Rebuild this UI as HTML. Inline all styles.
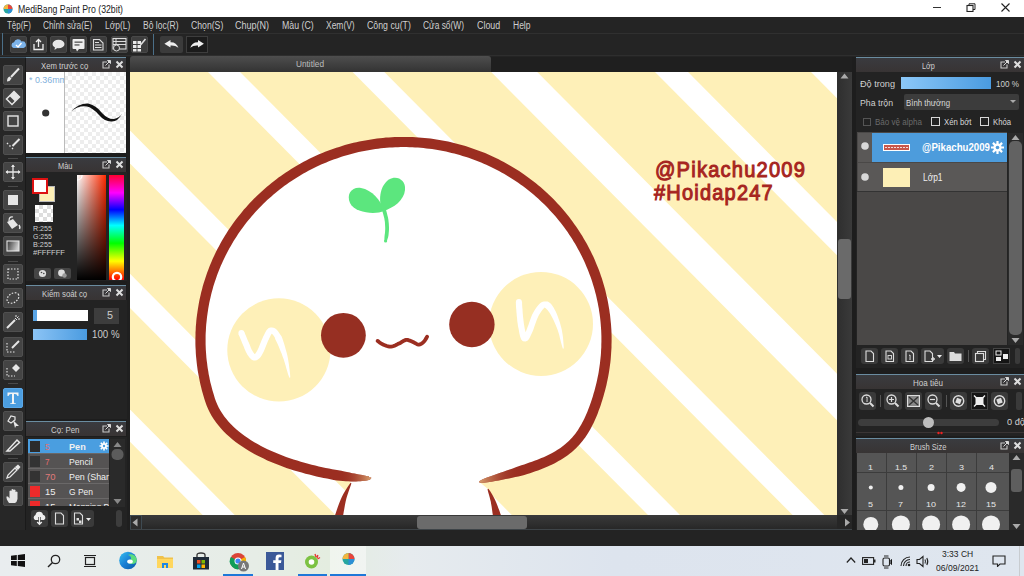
<!DOCTYPE html>
<html><head><meta charset="utf-8"><title>MediBang Paint Pro</title>
<style>
*{margin:0;padding:0;box-sizing:border-box}
html,body{width:1024px;height:576px;overflow:hidden}
body{position:relative;background:#1f1f1f;font-family:"Liberation Sans",sans-serif}
.a{position:absolute}
.t{white-space:pre;transform-origin:0 50%}
svg{overflow:hidden}
</style></head><body>
<div class="a" style="left:0px;top:0px;width:1024px;height:17px;background:#fff"></div>
<svg class="a" style="left:3px;top:4px" width="10" height="10" viewBox="0 0 10 10"><circle cx="5" cy="5" r="4.5" fill="#27a6a0"/><path d="M5,0.5 A4.5,4.5 0 0 1 9.5,5 L5,5Z" fill="#e8453c"/><path d="M0.5,5 A4.5,4.5 0 0 1 5,0.5 L5,5Z" fill="#f3b63f"/><path d="M5,5 L9.5,5 A4.5,4.5 0 0 1 5,9.5Z" fill="#2d8fd5"/></svg>
<span class="a t" style="left:18px;top:3.9px;font-size:10.5px;line-height:10.5px;color:#222;font-weight:400;font-family:'Liberation Sans',sans-serif;transform:scaleX(0.833);">MediBang Paint Pro (32bit)</span>
<div class="a" style="left:933px;top:7px;width:8px;height:1px;background:#333"></div>
<svg class="a" style="left:966px;top:3px" width="10" height="9" viewBox="0 0 10 9"><rect x="1" y="2.5" width="6" height="6" fill="none" stroke="#222" stroke-width="1.1"/><path d="M3,2.5 V0.8 H9 V6.5 H7" fill="none" stroke="#222" stroke-width="1"/></svg>
<svg class="a" style="left:1001px;top:3px" width="9" height="9" viewBox="0 0 9 9"><path d="M0.5,0.5 L8.5,8.5 M8.5,0.5 L0.5,8.5" stroke="#222" stroke-width="1.1"/></svg>
<div class="a" style="left:0px;top:17px;width:1024px;height:40px;background:#242424"></div>
<div class="a" style="left:0px;top:33px;width:1024px;height:1px;background:#303030"></div>
<div class="a" style="left:0px;top:55px;width:1024px;height:1px;background:#2e2e2e"></div>
<span class="a t" style="left:6.8px;top:20.5px;font-size:10px;line-height:10px;color:#cfcfcf;font-weight:400;font-family:'Liberation Sans',sans-serif;transform:scaleX(0.793);">Tệp(F)</span>
<span class="a t" style="left:43.2px;top:20.5px;font-size:10px;line-height:10px;color:#cfcfcf;font-weight:400;font-family:'Liberation Sans',sans-serif;transform:scaleX(0.827);">Chỉnh sửa(E)</span>
<span class="a t" style="left:105.3px;top:20.5px;font-size:10px;line-height:10px;color:#cfcfcf;font-weight:400;font-family:'Liberation Sans',sans-serif;transform:scaleX(0.849);">Lớp(L)</span>
<span class="a t" style="left:142.7px;top:20.5px;font-size:10px;line-height:10px;color:#cfcfcf;font-weight:400;font-family:'Liberation Sans',sans-serif;transform:scaleX(0.854);">Bộ lọc(R)</span>
<span class="a t" style="left:190.6px;top:20.5px;font-size:10px;line-height:10px;color:#cfcfcf;font-weight:400;font-family:'Liberation Sans',sans-serif;transform:scaleX(0.867);">Chọn(S)</span>
<span class="a t" style="left:235.2px;top:20.5px;font-size:10px;line-height:10px;color:#cfcfcf;font-weight:400;font-family:'Liberation Sans',sans-serif;transform:scaleX(0.902);">Chụp(N)</span>
<span class="a t" style="left:281.5px;top:20.5px;font-size:10px;line-height:10px;color:#cfcfcf;font-weight:400;font-family:'Liberation Sans',sans-serif;transform:scaleX(0.878);">Màu (C)</span>
<span class="a t" style="left:325.5px;top:20.5px;font-size:10px;line-height:10px;color:#cfcfcf;font-weight:400;font-family:'Liberation Sans',sans-serif;transform:scaleX(0.846);">Xem(V)</span>
<span class="a t" style="left:367px;top:20.5px;font-size:10px;line-height:10px;color:#cfcfcf;font-weight:400;font-family:'Liberation Sans',sans-serif;transform:scaleX(0.876);">Công cụ(T)</span>
<span class="a t" style="left:423.1px;top:20.5px;font-size:10px;line-height:10px;color:#cfcfcf;font-weight:400;font-family:'Liberation Sans',sans-serif;transform:scaleX(0.838);">Cửa sổ(W)</span>
<span class="a t" style="left:476.5px;top:20.5px;font-size:10px;line-height:10px;color:#cfcfcf;font-weight:400;font-family:'Liberation Sans',sans-serif;transform:scaleX(0.888);">Cloud</span>
<span class="a t" style="left:512.8px;top:20.5px;font-size:10px;line-height:10px;color:#cfcfcf;font-weight:400;font-family:'Liberation Sans',sans-serif;transform:scaleX(0.850);">Help</span>
<div class="a" style="left:2px;top:33px;width:1px;height:22px;background:#4b6f88"></div>
<div class="a" style="left:10px;top:36px;width:17px;height:17px;background:#3d3d3d;border:1px solid #484848;border-radius:2px"></div>
<div class="a" style="left:30px;top:36px;width:17px;height:17px;background:#3d3d3d;border:1px solid #484848;border-radius:2px"></div>
<div class="a" style="left:50px;top:36px;width:17px;height:17px;background:#3d3d3d;border:1px solid #484848;border-radius:2px"></div>
<div class="a" style="left:70px;top:36px;width:17px;height:17px;background:#3d3d3d;border:1px solid #484848;border-radius:2px"></div>
<div class="a" style="left:90px;top:36px;width:17px;height:17px;background:#3d3d3d;border:1px solid #484848;border-radius:2px"></div>
<div class="a" style="left:111px;top:36px;width:17px;height:17px;background:#3d3d3d;border:1px solid #484848;border-radius:2px"></div>
<div class="a" style="left:131px;top:36px;width:17px;height:17px;background:#3d3d3d;border:1px solid #484848;border-radius:2px"></div>
<svg class="a" style="left:10px;top:36px" width="17" height="17" viewBox="0 0 17 17"><path d="M3.5,12 A3,3 0 0 1 4,6.2 A4,4 0 0 1 11.5,5.5 A3.2,3.2 0 0 1 13.5,12Z" fill="#7db4ea"/><path d="M6,9 L8,11 L11.5,7" fill="none" stroke="#fff" stroke-width="1.4"/></svg>
<svg class="a" style="left:30px;top:36px" width="17" height="17" viewBox="0 0 17 17"><path d="M4,8 V13.5 H13 V8" fill="none" stroke="#eee" stroke-width="1.3"/><path d="M8.5,11 V3.5 M6,6 L8.5,3.5 L11,6" fill="none" stroke="#eee" stroke-width="1.3"/></svg>
<svg class="a" style="left:50px;top:36px" width="17" height="17" viewBox="0 0 17 17"><ellipse cx="8.5" cy="8" rx="6" ry="4.3" fill="#e8e8e8"/><path d="M5,11 L4.5,14 L8,11.5Z" fill="#e8e8e8"/></svg>
<svg class="a" style="left:70px;top:36px" width="17" height="17" viewBox="0 0 17 17"><rect x="2.5" y="3" width="12" height="10" rx="1" fill="#eee"/><path d="M6,13 L7,15.5 L9,13Z" fill="#eee"/><rect x="4.5" y="5.5" width="8" height="1.3" fill="#555"/><rect x="4.5" y="8.3" width="5" height="1.3" fill="#555"/></svg>
<svg class="a" style="left:90px;top:36px" width="17" height="17" viewBox="0 0 17 17"><path d="M3.5,3.5 H9.5 L13,7 V14 H3.5Z" fill="none" stroke="#ddd" stroke-width="1.1"/><path d="M5,6.5 H9 M5,9 H11.5 M5,11.5 H11.5" stroke="#ddd" stroke-width="1.1"/></svg>
<svg class="a" style="left:111px;top:36px" width="17" height="17" viewBox="0 0 17 17"><rect x="2" y="2.5" width="13" height="10.5" fill="none" stroke="#ddd" stroke-width="1.1"/><path d="M2,5.5 H15 M2,8.5 H15 M5,2.5 V8.5" stroke="#ddd" stroke-width="1"/><circle cx="5.5" cy="12" r="3" fill="#3b3b3b" stroke="#ddd" stroke-width="1"/></svg>
<svg class="a" style="left:131px;top:36px" width="17" height="17" viewBox="0 0 17 17"><path d="M2,5 H5.5 V8 H2Z M6.5,5 H10 V8 H6.5Z M2,9 H5.5 V12 H2Z M6.5,9 H10 V12 H6.5Z M2,13 H5.5 V15.5 H2Z M6.5,13 H10 V15.5 H6.5Z" fill="#e8e8e8"/><path d="M9.5,9 L14.5,3" stroke="#ddd" stroke-width="1.6"/></svg>
<div class="a" style="left:153px;top:34px;width:1px;height:21px;background:#4b6f88"></div>
<div class="a" style="left:160px;top:36px;width:23px;height:17px;background:#3b3b3b;border-radius:2px"></div>
<svg class="a" style="left:160px;top:36px" width="23" height="17" viewBox="0 0 23 17"><path d="M4.4,7.8 L10.5,4 V6.2 Q16.5,6 18.4,11.8 Q15,9.2 10.5,9.6 V11.6 Z" fill="#eee"/></svg>
<div class="a" style="left:186px;top:36px;width:22px;height:17px;background:#1b1b1b;border:1px solid #3d3d3d"></div>
<svg class="a" style="left:186px;top:36px" width="22" height="17" viewBox="0 0 22 17"><path d="M17.9,7.8 L12,4 V6.2 Q6,6 4.2,11.8 Q7.5,9.2 12,9.6 V11.6 Z" fill="#eee"/></svg>
<div class="a" style="left:0px;top:57px;width:26px;height:473px;background:#272727"></div>
<div class="a" style="left:25px;top:57px;width:1px;height:473px;background:#1a1a1a"></div>
<div class="a" style="left:0px;top:57px;width:26px;height:1px;background:#3d5566"></div>
<div class="a" style="left:8px;top:158px;width:10px;height:1px;background:#4a4a4a"></div>
<div class="a" style="left:8px;top:186px;width:10px;height:1px;background:#4a4a4a"></div>
<div class="a" style="left:8px;top:261px;width:10px;height:1px;background:#4a4a4a"></div>
<div class="a" style="left:8px;top:383px;width:10px;height:1px;background:#4a4a4a"></div>
<div class="a" style="left:8px;top:458px;width:10px;height:1px;background:#4a4a4a"></div>
<div class="a" style="left:3px;top:65px;width:20px;height:20px;background:#444;border:1px solid #505050;border-radius:2px"></div>
<div class="a" style="left:3px;top:88px;width:20px;height:20px;background:#444;border:1px solid #505050;border-radius:2px"></div>
<div class="a" style="left:3px;top:111px;width:20px;height:20px;background:#444;border:1px solid #505050;border-radius:2px"></div>
<div class="a" style="left:3px;top:135px;width:20px;height:20px;background:#444;border:1px solid #505050;border-radius:2px"></div>
<div class="a" style="left:3px;top:162px;width:20px;height:20px;background:#444;border:1px solid #505050;border-radius:2px"></div>
<div class="a" style="left:3px;top:190px;width:20px;height:20px;background:#444;border:1px solid #505050;border-radius:2px"></div>
<div class="a" style="left:3px;top:213px;width:20px;height:20px;background:#444;border:1px solid #505050;border-radius:2px"></div>
<div class="a" style="left:3px;top:236px;width:20px;height:20px;background:#444;border:1px solid #505050;border-radius:2px"></div>
<div class="a" style="left:3px;top:264px;width:20px;height:20px;background:#444;border:1px solid #505050;border-radius:2px"></div>
<div class="a" style="left:3px;top:288px;width:20px;height:20px;background:#444;border:1px solid #505050;border-radius:2px"></div>
<div class="a" style="left:3px;top:312px;width:20px;height:20px;background:#444;border:1px solid #505050;border-radius:2px"></div>
<div class="a" style="left:3px;top:337px;width:20px;height:20px;background:#444;border:1px solid #505050;border-radius:2px"></div>
<div class="a" style="left:3px;top:360px;width:20px;height:20px;background:#444;border:1px solid #505050;border-radius:2px"></div>
<div class="a" style="left:3px;top:388px;width:20px;height:20px;background:#4c9ee0;border:1px solid #5aa8e8;border-radius:2px"></div>
<div class="a" style="left:3px;top:411px;width:20px;height:20px;background:#444;border:1px solid #505050;border-radius:2px"></div>
<div class="a" style="left:3px;top:435px;width:20px;height:20px;background:#444;border:1px solid #505050;border-radius:2px"></div>
<div class="a" style="left:3px;top:462px;width:20px;height:20px;background:#444;border:1px solid #505050;border-radius:2px"></div>
<div class="a" style="left:3px;top:486px;width:20px;height:20px;background:#444;border:1px solid #505050;border-radius:2px"></div>
<svg class="a" style="left:3px;top:65px" width="20" height="20" viewBox="0 0 20 20"><path d="M16,3.5 L8,12" stroke="#e6e6e6" stroke-width="2"/><path d="M4,16.5 Q4,12.5 6.5,11.5 L8.5,13.5 Q7.5,16 4,16.5Z" fill="#e6e6e6"/></svg>
<svg class="a" style="left:3px;top:88px" width="20" height="20" viewBox="0 0 20 20"><path d="M11,3.5 L16.5,9 L9,16.5 L3.5,11Z" fill="none" stroke="#e6e6e6" stroke-width="1.5"/><path d="M11,3.5 L16.5,9 L12,13.5 L6.5,8Z" fill="#e6e6e6"/></svg>
<svg class="a" style="left:3px;top:111px" width="20" height="20" viewBox="0 0 20 20"><rect x="5" y="5" width="10" height="10" fill="none" stroke="#e6e6e6" stroke-width="1.4"/></svg>
<svg class="a" style="left:3px;top:135px" width="20" height="20" viewBox="0 0 20 20"><path d="M4,8 L5,9 M6.5,10.5 L7.5,11.5 M9,13 L10,14" stroke="#e6e6e6" stroke-width="1.4"/><path d="M9.5,11 L16.5,4" stroke="#e6e6e6" stroke-width="2"/></svg>
<svg class="a" style="left:3px;top:162px" width="20" height="20" viewBox="0 0 20 20"><path d="M10,3 V17 M3,10 H17" stroke="#e6e6e6" stroke-width="1.3"/><path d="M10,2.5 L8,5 H12Z M10,17.5 L8,15 H12Z M2.5,10 L5,8 V12Z M17.5,10 L15,8 V12Z" fill="#e6e6e6"/></svg>
<svg class="a" style="left:3px;top:190px" width="20" height="20" viewBox="0 0 20 20"><rect x="5" y="5" width="10" height="10" fill="#e6e6e6"/></svg>
<svg class="a" style="left:3px;top:213px" width="20" height="20" viewBox="0 0 20 20"><path d="M4,9 L10,6 L15,12 L9,16Z" fill="#e6e6e6"/><path d="M6,8 Q6,3 10,4" fill="none" stroke="#e6e6e6" stroke-width="1.2"/><path d="M16,12 Q17.5,14 16.5,16" stroke="#e6e6e6" stroke-width="1.5" fill="none"/></svg>
<svg class="a" style="left:3px;top:236px" width="20" height="20" viewBox="0 0 20 20"><defs><linearGradient id="g8" x1="0" y1="0" x2="1" y2="0.3"><stop offset="0" stop-color="#333"/><stop offset="1" stop-color="#ccc"/></linearGradient></defs><rect x="4" y="5" width="12" height="10" fill="url(#g8)" stroke="#e6e6e6" stroke-width="1.1"/></svg>
<svg class="a" style="left:3px;top:264px" width="20" height="20" viewBox="0 0 20 20"><rect x="5" y="5" width="10" height="10" fill="none" stroke="#e6e6e6" stroke-width="1.2" stroke-dasharray="1.5 1.5"/></svg>
<svg class="a" style="left:3px;top:288px" width="20" height="20" viewBox="0 0 20 20"><ellipse cx="10" cy="10" rx="6.5" ry="4.5" transform="rotate(-35 10 10)" fill="none" stroke="#e6e6e6" stroke-width="1.2" stroke-dasharray="1.5 1.5"/></svg>
<svg class="a" style="left:3px;top:312px" width="20" height="20" viewBox="0 0 20 20"><path d="M4,16 L12,8" stroke="#e6e6e6" stroke-width="2"/><path d="M13,3 V5 M15.5,4.5 L14,6 M17,7 H15 M12,6 L14,8" stroke="#e6e6e6" stroke-width="1"/></svg>
<svg class="a" style="left:3px;top:337px" width="20" height="20" viewBox="0 0 20 20"><path d="M4,6 V15 H13" fill="none" stroke="#e6e6e6" stroke-width="1.1" stroke-dasharray="1.5 1.5"/><path d="M9,11 L16,4" stroke="#e6e6e6" stroke-width="2"/></svg>
<svg class="a" style="left:3px;top:360px" width="20" height="20" viewBox="0 0 20 20"><path d="M4,8 V16 H12" fill="none" stroke="#e6e6e6" stroke-width="1.1" stroke-dasharray="1.5 1.5"/><path d="M9,8 L13,4 L17,8 L13,12Z" fill="#e6e6e6"/></svg>
<svg class="a" style="left:3px;top:388px" width="20" height="20" viewBox="0 0 20 20"><path d="M4.5,4.5 H15.5 V8 H14.5 Q14,6 12,6 H11 V14.5 Q11,15.5 13,15.5 V16 H7 V15.5 Q9,15.5 9,14.5 V6 H8 Q6,6 5.5,8 H4.5Z" fill="#f4f4f4"/></svg>
<svg class="a" style="left:3px;top:411px" width="20" height="20" viewBox="0 0 20 20"><path d="M5,10 L8,5 L12,6 L12,9 L8,12Z" fill="none" stroke="#e6e6e6" stroke-width="1.2"/><path d="M10,9 L16,15 L13,15 L12,17Z" fill="#e6e6e6"/></svg>
<svg class="a" style="left:3px;top:435px" width="20" height="20" viewBox="0 0 20 20"><path d="M4,16 L14,5 L16.5,7.5 L7,16Z" fill="none" stroke="#e6e6e6" stroke-width="1.5"/></svg>
<svg class="a" style="left:3px;top:462px" width="20" height="20" viewBox="0 0 20 20"><path d="M4,16 L5,13 L12,6 L14,8 L7,15Z" fill="none" stroke="#e6e6e6" stroke-width="1.3"/><path d="M12,5 L15,2.5 L17.5,5 L15,8Z" fill="#e6e6e6"/></svg>
<svg class="a" style="left:3px;top:486px" width="20" height="20" viewBox="0 0 20 20"><path d="M6,17 Q3,13 3.5,10.5 L5,10.5 L6.5,12.5 V5 Q7.5,4 8.5,5 V10 V3.5 Q9.5,2.5 10.5,3.5 V10 V4 Q11.5,3 12.5,4 V10.5 V6 Q13.5,5 14.5,6 V13 Q14,16 12,17Z" fill="#e6e6e6"/></svg>
<div class="a" style="left:26px;top:57px;width:101px;height:473px;background:#1d1d1d"></div>
<div class="a" style="left:26px;top:57px;width:100px;height:1px;background:#6a8ca0"></div>
<div class="a" style="left:26px;top:58px;width:100px;height:14px;background:linear-gradient(#3a3b3f,#383434)"></div>
<span class="a t" style="left:40.8px;top:60.8px;font-size:9.5px;line-height:9.5px;color:#cfcfcf;font-weight:400;font-family:'Liberation Sans',sans-serif;transform:scaleX(0.814);">Xem trước cọ</span>
<svg class="a" style="left:102px;top:60px" width="9" height="9" viewBox="0 0 9 9"><path d="M5,2 H1 V8 H7 V4.5" fill="none" stroke="#c8c8c8" stroke-width="1.1"/><path d="M3.5,5.5 L7,2 M5.5,0.5 H8.5 V3.5Z" fill="#d8d8d8" stroke="#d8d8d8" stroke-width="1"/></svg>
<svg class="a" style="left:115px;top:60px" width="9" height="9" viewBox="0 0 9 9"><path d="M1.5,1.5 L7.5,7.5 M7.5,1.5 L1.5,7.5" stroke="#dedede" stroke-width="2"/></svg>
<div class="a" style="left:26px;top:72px;width:38px;height:81px;background:#fff"></div>
<span class="a t" style="left:28.5px;top:75.5px;font-size:9px;line-height:9px;color:#7fb0dc;font-weight:400;font-family:'Liberation Sans',sans-serif;transform:scaleX(0.987);">* 0.36mm</span>
<div class="a" style="left:64px;top:72px;width:62px;height:81px;background-color:#fff;background-image:linear-gradient(45deg,#ededed 25%,transparent 25%,transparent 75%,#ededed 75%),linear-gradient(45deg,#ededed 25%,transparent 25%,transparent 75%,#ededed 75%);background-size:8px 8px;background-position:0 0,4px 4px"></div>
<div class="a" style="left:64px;top:72px;width:0px;height:0px;"></div>
<svg class="a" style="left:26px;top:72px" width="100" height="81" viewBox="0 0 100 81"><circle cx="19.7" cy="41" r="3.6" fill="#333"/><path d="M44.7,39.7 Q53,31 62,31.5 Q70,33 76,41 Q82,47.5 88,47 Q93,46 96,41.8 Q92,49.5 86,49.5 Q79,50 73,43 Q67,36 61,34.5 Q53,33 44.7,39.7Z" fill="#111"/></svg>
<div class="a" style="left:64px;top:72px;width:1px;height:81px;background:#bbb"></div>
<div class="a" style="left:26px;top:157px;width:100px;height:1px;background:#6a8ca0"></div>
<div class="a" style="left:26px;top:158px;width:100px;height:14px;background:linear-gradient(#3a3b3f,#383434)"></div>
<span class="a t" style="left:57.5px;top:160.8px;font-size:9.5px;line-height:9.5px;color:#cfcfcf;font-weight:400;font-family:'Liberation Sans',sans-serif;transform:scaleX(0.784);">Màu</span>
<svg class="a" style="left:102px;top:160px" width="9" height="9" viewBox="0 0 9 9"><path d="M5,2 H1 V8 H7 V4.5" fill="none" stroke="#c8c8c8" stroke-width="1.1"/><path d="M3.5,5.5 L7,2 M5.5,0.5 H8.5 V3.5Z" fill="#d8d8d8" stroke="#d8d8d8" stroke-width="1"/></svg>
<svg class="a" style="left:115px;top:160px" width="9" height="9" viewBox="0 0 9 9"><path d="M1.5,1.5 L7.5,7.5 M7.5,1.5 L1.5,7.5" stroke="#dedede" stroke-width="2"/></svg>
<div class="a" style="left:26px;top:172px;width:101px;height:109px;background:#232323"></div>
<div class="a" style="left:32px;top:178px;width:16px;height:16px;background:#fff;border:2px solid #d11"></div>
<div class="a" style="left:39px;top:186px;width:16px;height:16px;background:#fdefb6;border:1px solid #bbb"></div>
<div class="a" style="left:32px;top:178px;width:16px;height:16px;background:#fff;border:2px solid #d11"></div>
<div class="a" style="left:35px;top:205px;width:18px;height:17px;background-color:#fff;background-image:linear-gradient(45deg,#ddd 25%,transparent 25%,transparent 75%,#ddd 75%),linear-gradient(45deg,#ddd 25%,transparent 25%,transparent 75%,#ddd 75%);background-size:8px 8px;background-position:0 0,4px 4px"></div>
<div class="a" style="left:77px;top:175px;width:29px;height:105px;background:linear-gradient(to bottom,rgba(0,0,0,0),#000),linear-gradient(to right,#fff,#ff2a00)"></div>
<div class="a" style="left:109px;top:175px;width:15px;height:105px;background:linear-gradient(to bottom,#ff0030 0%,#ff00ff 17%,#0000ff 33%,#00ffff 48%,#00ff00 65%,#ffff00 82%,#ff0000 100%)"></div>
<svg class="a" style="left:110px;top:270px" width="14" height="10" viewBox="0 0 14 10"><circle cx="7" cy="7" r="4.2" fill="none" stroke="#fff" stroke-width="2.2"/></svg>
<svg class="a" style="left:77px;top:175px" width="8" height="8" viewBox="0 0 8 8"><circle cx="0.5" cy="0.5" r="4.5" fill="none" stroke="#fff" stroke-width="1.2"/></svg>
<span class="a t" style="left:32.5px;top:225.0px;font-size:8px;line-height:8px;color:#cfcfcf;font-weight:400;font-family:'Liberation Sans',sans-serif;transform:scaleX(0.890);">R:255</span>
<span class="a t" style="left:32.5px;top:233.0px;font-size:8px;line-height:8px;color:#cfcfcf;font-weight:400;font-family:'Liberation Sans',sans-serif;transform:scaleX(0.872);">G:255</span>
<span class="a t" style="left:32.5px;top:241.0px;font-size:8px;line-height:8px;color:#cfcfcf;font-weight:400;font-family:'Liberation Sans',sans-serif;transform:scaleX(0.909);">B:255</span>
<span class="a t" style="left:32.5px;top:248.5px;font-size:8px;line-height:8px;color:#cfcfcf;font-weight:400;font-family:'Liberation Sans',sans-serif;transform:scaleX(0.947);">#FFFFFF</span>
<div class="a" style="left:34px;top:268px;width:17px;height:11px;background:#454545;border-radius:2px"></div>
<div class="a" style="left:54px;top:268px;width:17px;height:11px;background:#454545;border-radius:2px"></div>
<svg class="a" style="left:34px;top:268px" width="17" height="11" viewBox="0 0 17 11"><circle cx="8.5" cy="5.5" r="3.6" fill="#ddd"/><circle cx="7.5" cy="4.5" r="0.8" fill="#454545"/><circle cx="9.8" cy="5.5" r="0.8" fill="#454545"/></svg>
<svg class="a" style="left:54px;top:268px" width="17" height="11" viewBox="0 0 17 11"><circle cx="7.5" cy="5" r="3.4" fill="#ddd"/><circle cx="10.5" cy="7.5" r="2.2" fill="#999"/></svg>
<div class="a" style="left:26px;top:285px;width:100px;height:1px;background:#6a8ca0"></div>
<div class="a" style="left:26px;top:286px;width:100px;height:14px;background:linear-gradient(#3a3b3f,#383434)"></div>
<span class="a t" style="left:42.2px;top:288.8px;font-size:9.5px;line-height:9.5px;color:#cfcfcf;font-weight:400;font-family:'Liberation Sans',sans-serif;transform:scaleX(0.823);">Kiểm soát cọ</span>
<svg class="a" style="left:102px;top:288px" width="9" height="9" viewBox="0 0 9 9"><path d="M5,2 H1 V8 H7 V4.5" fill="none" stroke="#c8c8c8" stroke-width="1.1"/><path d="M3.5,5.5 L7,2 M5.5,0.5 H8.5 V3.5Z" fill="#d8d8d8" stroke="#d8d8d8" stroke-width="1"/></svg>
<svg class="a" style="left:115px;top:288px" width="9" height="9" viewBox="0 0 9 9"><path d="M1.5,1.5 L7.5,7.5 M7.5,1.5 L1.5,7.5" stroke="#dedede" stroke-width="2"/></svg>
<div class="a" style="left:26px;top:300px;width:101px;height:119px;background:#232323"></div>
<div class="a" style="left:33px;top:310px;width:55px;height:11px;background:#fff"></div>
<div class="a" style="left:33px;top:310px;width:4px;height:11px;background:#5aa5e6"></div>
<div class="a" style="left:94px;top:308px;width:25px;height:16px;background:#3d3d3d"></div>
<span class="a t" style="left:107px;top:311.0px;font-size:10px;line-height:10px;color:#ccc;font-weight:400;font-family:'Liberation Sans',sans-serif;transform:scaleX(1.079);">5</span>
<div class="a" style="left:33px;top:329px;width:54px;height:11px;background:linear-gradient(to right,#8cc4f5,#4a9be0)"></div>
<span class="a t" style="left:91.5px;top:329.5px;font-size:10px;line-height:10px;color:#ccc;font-weight:400;font-family:'Liberation Sans',sans-serif;transform:scaleX(0.970);">100 %</span>
<div class="a" style="left:26px;top:421px;width:100px;height:1px;background:#6a8ca0"></div>
<div class="a" style="left:26px;top:422px;width:100px;height:14px;background:linear-gradient(#3a3b3f,#383434)"></div>
<span class="a t" style="left:50.5px;top:424.8px;font-size:9.5px;line-height:9.5px;color:#cfcfcf;font-weight:400;font-family:'Liberation Sans',sans-serif;transform:scaleX(0.830);">Cọ: Pen</span>
<svg class="a" style="left:102px;top:424px" width="9" height="9" viewBox="0 0 9 9"><path d="M5,2 H1 V8 H7 V4.5" fill="none" stroke="#c8c8c8" stroke-width="1.1"/><path d="M3.5,5.5 L7,2 M5.5,0.5 H8.5 V3.5Z" fill="#d8d8d8" stroke="#d8d8d8" stroke-width="1"/></svg>
<svg class="a" style="left:115px;top:424px" width="9" height="9" viewBox="0 0 9 9"><path d="M1.5,1.5 L7.5,7.5 M7.5,1.5 L1.5,7.5" stroke="#dedede" stroke-width="2"/></svg>
<div class="a" style="left:26px;top:437px;width:101px;height:93px;background:#232323"></div>
<div class="a" style="left:28px;top:439px;width:81px;height:68px;background:#555353"></div>
<div class="a" style="left:28px;top:439px;width:81px;height:15px;background:#4a9ee0"></div>
<div class="a" style="left:28px;top:453px;width:81px;height:1px;background:#6a6868"></div>
<div class="a" style="left:30px;top:441px;width:10px;height:11px;background:#2b2b2b"></div>
<span class="a t" style="left:45px;top:442.2px;font-size:9.5px;line-height:9.5px;color:#e07070;font-weight:400;font-family:'Liberation Sans',sans-serif;transform:scaleX(0.850);">5</span>
<span class="a t" style="left:68.6px;top:442.2px;font-size:9.5px;line-height:9.5px;color:#f0f0f0;font-weight:700;font-family:'Liberation Sans',sans-serif;transform:scaleX(0.958);">Pen</span>
<div class="a" style="left:28px;top:468px;width:81px;height:1px;background:#6a6868"></div>
<div class="a" style="left:30px;top:456px;width:10px;height:11px;background:#333"></div>
<span class="a t" style="left:45px;top:457.2px;font-size:9.5px;line-height:9.5px;color:#e86b6b;font-weight:400;font-family:'Liberation Sans',sans-serif;transform:scaleX(0.850);">7</span>
<span class="a t" style="left:68.6px;top:457.2px;font-size:9.5px;line-height:9.5px;color:#f0f0f0;font-weight:400;font-family:'Liberation Sans',sans-serif;transform:scaleX(0.912);">Pencil</span>
<div class="a" style="left:28px;top:483px;width:81px;height:1px;background:#6a6868"></div>
<div class="a" style="left:30px;top:471px;width:10px;height:11px;background:#333"></div>
<span class="a t" style="left:45px;top:472.2px;font-size:9.5px;line-height:9.5px;color:#e07a7a;font-weight:400;font-family:'Liberation Sans',sans-serif;transform:scaleX(0.993);">70</span>
<span class="a t" style="left:68.6px;top:472.2px;font-size:9.5px;line-height:9.5px;color:#f0f0f0;font-weight:400;font-family:'Liberation Sans',sans-serif;transform:scaleX(0.935);">Pen (Shar</span>
<div class="a" style="left:28px;top:498px;width:81px;height:1px;background:#6a6868"></div>
<div class="a" style="left:30px;top:486px;width:10px;height:11px;background:#ee2a2a"></div>
<span class="a t" style="left:45px;top:487.2px;font-size:9.5px;line-height:9.5px;color:#eee;font-weight:400;font-family:'Liberation Sans',sans-serif;transform:scaleX(0.993);">15</span>
<span class="a t" style="left:68.6px;top:487.2px;font-size:9.5px;line-height:9.5px;color:#f0f0f0;font-weight:400;font-family:'Liberation Sans',sans-serif;transform:scaleX(0.891);">G Pen</span>
<div class="a" style="left:28px;top:513px;width:81px;height:1px;background:#6a6868"></div>
<div class="a" style="left:30px;top:501px;width:10px;height:11px;background:#ee2a2a"></div>
<span class="a t" style="left:45px;top:502.2px;font-size:9.5px;line-height:9.5px;color:#eee;font-weight:400;font-family:'Liberation Sans',sans-serif;transform:scaleX(0.993);">15</span>
<span class="a t" style="left:68.6px;top:502.2px;font-size:9.5px;line-height:9.5px;color:#f0f0f0;font-weight:400;font-family:'Liberation Sans',sans-serif;transform:scaleX(0.881);">Mapping P</span>
<div class="a" style="left:26px;top:506px;width:84px;height:24px;background:#232323"></div>
<svg class="a" style="left:99px;top:440px" width="10" height="12" viewBox="0 0 10 12"><circle cx="5" cy="6" r="2.8" fill="#fff"/><path d="M5,1.5 V10.5 M0.5,6 H9.5 M1.8,2.8 L8.2,9.2 M8.2,2.8 L1.8,9.2" stroke="#fff" stroke-width="1.6"/><circle cx="5" cy="6" r="1.2" fill="#4a9ee0"/></svg>
<div class="a" style="left:110px;top:439px;width:15px;height:68px;background:#2a2a2a"></div>
<svg class="a" style="left:110px;top:439px" width="15" height="68" viewBox="0 0 15 68"><path d="M7.5,3 L3.5,8 H11.5Z M7.5,65 L3.5,60 H11.5Z" fill="#888"/><rect x="1.5" y="10" width="12" height="11" rx="5" fill="#5c5c5c"/></svg>
<div class="a" style="left:31px;top:510px;width:17px;height:17px;background:#3a3a3a;border-radius:3px"></div>
<div class="a" style="left:51px;top:510px;width:17px;height:17px;background:#3a3a3a;border-radius:3px"></div>
<div class="a" style="left:71px;top:510px;width:23px;height:17px;background:#3a3a3a;border-radius:3px"></div>
<svg class="a" style="left:31px;top:510px" width="17" height="17" viewBox="0 0 17 17"><path d="M4,10 A2.8,2.8 0 0 1 4.5,5 A3.8,3.8 0 0 1 12,4.8 A2.8,2.8 0 0 1 13,10Z" fill="#eee"/><path d="M8.5,7 V14.5 M6,12 L8.5,14.5 L11,12" fill="none" stroke="#3a3a3a" stroke-width="2.5"/><path d="M8.5,7 V14.5 M6.2,12 L8.5,14.3 L10.8,12" fill="none" stroke="#eee" stroke-width="1.3"/></svg>
<svg class="a" style="left:51px;top:510px" width="17" height="17" viewBox="0 0 17 17"><path d="M4.5,3 H10 L12.5,5.5 V14 H4.5Z" fill="none" stroke="#ddd" stroke-width="1.1"/></svg>
<svg class="a" style="left:71px;top:510px" width="23" height="17" viewBox="0 0 23 17"><path d="M3.5,3 H9 L11.5,5.5 V14 H3.5Z" fill="none" stroke="#ddd" stroke-width="1.1"/><rect x="5.5" y="8" width="2.5" height="2.5" fill="#ddd"/><rect x="8" y="10.5" width="2.5" height="2.5" fill="#ddd"/><path d="M15,8 H20 L17.5,11Z" fill="#eee"/></svg>
<div class="a" style="left:116px;top:510px;width:6px;height:17px;background:#3d3d3d;border-radius:3px"></div>
<div class="a" style="left:127px;top:57px;width:730px;height:473px;background:#1f1f1f"></div>
<div class="a" style="left:130px;top:56px;width:361px;height:16px;background:linear-gradient(#4e4e4e,#333);border-radius:3px 3px 0 0"></div>
<span class="a t" style="left:295.5px;top:59.5px;font-size:9px;line-height:9px;color:#bdbdbd;font-weight:400;font-family:'Liberation Sans',sans-serif;transform:scaleX(0.918);">Untitled</span>
<svg class="a" style="left:130px;top:72px" width="707" height="443" viewBox="130 72 707 443">
<rect x="130" y="72" width="707" height="443" fill="#fef0b8"/>
<polygon points="-385.2,72 -351.2,72 89.8,516 55.8,516" fill="#fff"/><polygon points="-237.3,72 -205.3,72 235.7,516 203.7,516" fill="#fff"/><polygon points="-104.5,72 -70.5,72 370.5,516 336.5,516" fill="#fff"/><polygon points="39.1,72 71.8,72 512.8,516 480.1,516" fill="#fff"/><polygon points="208.0,72 240.0,72 681.0,516 649.0,516" fill="#fff"/><polygon points="352.6,72 384.3,72 825.3,516 793.6,516" fill="#fff"/><polygon points="491.2,72 537.2,72 978.2,516 932.2,516" fill="#fff"/><polygon points="655.0,72 688.0,72 1129.0,516 1096.0,516" fill="#fff"/><polygon points="811.0,72 844.0,72 1285.0,516 1252.0,516" fill="#fff"/>
<path d="M370.0,477.5 L370.0,477.7 L369.7,477.8 L369.3,478.0 L368.6,478.1 L367.7,478.2 L366.6,478.2 L365.4,478.2 L363.9,478.2 L362.3,478.1 L360.4,478.0 L358.5,477.9 L356.3,477.7 L354.1,477.5 L351.6,477.3 L349.1,477.0 L346.4,476.6 L343.6,476.3 L340.7,475.8 L337.6,475.4 L334.5,474.8 L331.3,474.3 L328.0,473.6 L324.6,473.0 L321.2,472.2 L317.7,471.4 L314.1,470.6 L310.5,469.7 L306.8,468.7 L303.1,467.7 L299.4,466.6 L295.6,465.5 L291.9,464.3 L288.1,463.0 L284.3,461.7 L280.6,460.3 L276.8,458.8 L273.1,457.3 L269.4,455.7 L265.8,454.0 L262.2,452.3 L258.6,450.4 L255.1,448.5 L251.7,446.6 L248.3,444.5 L245.0,442.4 L241.8,440.2 L238.7,437.9 L235.7,435.5 L232.8,433.0 L230.0,430.5 L227.3,427.8 L224.8,425.1 L222.4,422.3 L220.2,419.4 L218.1,416.4 L216.1,413.3 L214.3,410.1 L212.7,406.8 L211.3,403.5 L210.0,400.0 L209.2,397.3 L208.4,394.6 L207.6,391.8 L206.8,389.1 L206.1,386.3 L205.5,383.6 L204.9,380.8 L204.3,378.0 L203.7,375.2 L203.2,372.4 L202.8,369.6 L202.4,366.8 L202.0,364.0 L201.7,361.1 L201.4,358.3 L201.1,355.5 L200.9,352.6 L200.7,349.8 L200.6,347.0 L200.5,344.1 L200.5,341.3 L200.5,338.5 L200.5,335.6 L200.6,332.8 L200.8,329.9 L200.9,327.1 L201.1,324.3 L201.4,321.4 L201.7,318.6 L202.0,315.8 L202.4,313.0 L202.8,310.2 L203.3,307.3 L203.8,304.5 L204.3,301.8 L204.9,299.0 L205.5,296.2 L206.2,293.4 L206.9,290.7 L207.6,287.9 L208.4,285.2 L209.3,282.5 L210.1,279.8 L211.0,277.1 L212.0,274.4 L213.0,271.7 L214.0,269.0 L215.1,266.4 L216.2,263.8 L217.3,261.1 L218.5,258.5 L219.7,256.0 L220.9,253.4 L222.2,250.9 L223.6,248.3 L224.9,245.8 L226.3,243.3 L227.8,240.9 L229.3,238.4 L230.8,236.0 L232.3,233.6 L233.9,231.2 L235.5,228.8 L237.2,226.5 L238.9,224.2 L240.6,221.9 L242.3,219.6 L244.1,217.4 L245.9,215.2 L247.8,213.0 L249.7,210.8 L251.6,208.7 L253.5,206.5 L255.5,204.5 L257.5,202.4 L259.6,200.4 L261.6,198.4 L263.7,196.4 L265.9,194.5 L268.0,192.5 L270.2,190.7 L272.4,188.8 L274.7,187.0 L276.9,185.2 L279.2,183.5 L281.5,181.7 L283.9,180.0 L286.2,178.4 L288.6,176.8 L291.0,175.2 L293.5,173.6 L295.9,172.1 L298.4,170.6 L300.9,169.1 L303.4,167.7 L306.0,166.3 L308.5,165.0 L311.1,163.7 L313.7,162.4 L316.4,161.2 L319.0,160.0 L321.7,158.8 L324.3,157.7 L327.0,156.6 L329.7,155.5 L332.4,154.5 L335.2,153.5 L337.9,152.6 L340.7,151.7 L343.5,150.9 L346.3,150.0 L349.1,149.3 L351.9,148.5 L354.7,147.8 L357.5,147.1 L360.4,146.5 L363.2,145.9 L366.1,145.4 L368.9,144.9 L371.8,144.4 L374.7,144.0 L377.6,143.6 L380.5,143.3 L383.4,143.0 L386.3,142.7 L389.2,142.5 L392.1,142.3 L395.0,142.2 L397.9,142.1 L400.8,142.0 L403.7,142.0 L406.6,142.0 L409.6,142.1 L412.5,142.2 L415.4,142.3 L418.3,142.5 L421.2,142.8 L424.1,143.0 L427.0,143.3 L429.9,143.7 L432.8,144.1 L435.6,144.5 L438.5,145.0 L441.4,145.5 L444.2,146.0 L447.1,146.6 L449.9,147.2 L452.8,147.9 L455.6,148.6 L458.4,149.4 L461.2,150.2 L464.0,151.0 L466.7,151.9 L469.5,152.8 L472.3,153.7 L475.0,154.7 L477.7,155.7 L480.4,156.8 L483.1,157.9 L485.8,159.0 L488.4,160.2 L491.1,161.4 L493.7,162.6 L496.3,163.9 L498.9,165.2 L501.4,166.6 L504.0,168.0 L506.5,169.4 L509.0,170.8 L511.5,172.3 L513.9,173.9 L516.4,175.4 L518.8,177.0 L521.2,178.6 L523.5,180.3 L525.9,182.0 L528.2,183.7 L530.4,185.5 L532.7,187.3 L534.9,189.1 L537.1,191.0 L539.3,192.9 L541.5,194.8 L543.6,196.7 L545.7,198.7 L547.8,200.7 L549.8,202.7 L551.8,204.8 L553.8,206.9 L555.7,209.0 L557.6,211.1 L559.5,213.3 L561.4,215.5 L563.2,217.7 L565.0,220.0 L566.7,222.2 L568.4,224.5 L570.1,226.9 L571.7,229.2 L573.4,231.6 L574.9,234.0 L576.5,236.4 L578.0,238.8 L579.5,241.3 L580.9,243.7 L582.3,246.2 L583.6,248.7 L585.0,251.3 L586.3,253.8 L587.5,256.4 L588.7,259.0 L589.9,261.6 L591.0,264.2 L592.1,266.8 L593.2,269.5 L594.2,272.1 L595.2,274.8 L596.1,277.5 L597.0,280.2 L597.9,282.9 L598.7,285.6 L599.5,288.4 L600.2,291.1 L600.9,293.9 L601.6,296.6 L602.2,299.4 L602.8,302.2 L603.3,305.0 L603.8,307.8 L604.3,310.6 L604.7,313.4 L605.0,316.2 L605.4,319.1 L605.6,321.9 L605.9,324.7 L606.1,327.6 L606.3,330.4 L606.4,333.2 L606.5,336.1 L606.5,338.9 L606.5,341.7 L606.4,344.6 L606.4,347.4 L606.2,350.3 L606.1,353.1 L605.8,355.9 L605.6,358.8 L605.3,361.6 L605.0,364.4 L604.6,367.2 L604.1,370.0 L603.7,372.9 L603.2,375.6 L602.6,378.4 L602.1,381.2 L601.4,384.0 L600.8,386.8 L600.0,389.5 L599.3,392.3 L598.5,395.0 L597.6,397.9 L596.7,400.8 L595.8,403.5 L594.9,406.2 L594.0,408.8 L593.0,411.3 L592.0,413.8 L591.0,416.1 L590.0,418.5 L589.0,420.7 L587.9,422.8 L586.8,424.9 L585.7,427.0 L584.6,428.9 L583.4,430.8 L582.2,432.7 L581.0,434.5 L579.8,436.2 L578.5,437.9 L577.1,439.5 L575.8,441.1 L574.4,442.6 L572.9,444.1 L571.4,445.5 L569.9,446.9 L568.3,448.3 L566.7,449.6 L565.1,450.8 L563.4,452.1 L561.6,453.3 L559.8,454.4 L557.9,455.6 L556.0,456.7 L554.1,457.8 L552.0,458.8 L550.0,459.8 L547.8,460.9 L545.6,461.8 L543.4,462.8 L541.0,463.8 L538.6,464.7 L536.2,465.6 L533.7,466.5 L531.1,467.4 L528.4,468.3 L525.7,469.2 L522.9,470.1 L520.0,471.0 L517.1,471.9 L514.1,472.7 L511.0,473.6 L507.8,474.5 L504.6,475.4 L501.2,476.3 L497.8,477.2 L494.3,478.1 L490.7,479.1 L487.0,480.0 L483.3,481.0 L479.4,482.0Z" fill="#fff"/>
<path d="M352,470 L485,470 L479.5,482 L488,489 L498,516 L334,516 L350,485 Z" fill="#fff"/>
<circle cx="278.9" cy="349.9" r="51.6" fill="#fef0b8"/>
<circle cx="541" cy="323.9" r="52" fill="#fef0b8"/>
<path d="M238.5,334.3 L238.9,335.2 L239.4,336.3 L240.0,337.7 L240.6,339.2 L241.3,340.8 L241.9,342.4 L242.6,343.9 L243.1,345.2 L243.7,346.4 L244.1,347.6 L244.6,348.9 L245.1,350.1 L245.6,351.3 L246.2,352.5 L246.8,353.6 L247.4,354.7 L248.0,355.6 L248.7,356.6 L249.4,357.5 L250.2,358.3 L251.1,359.2 L252.2,359.9 L253.6,360.5 L255.2,360.6 L256.7,360.2 L257.9,359.6 L258.9,358.8 L259.8,357.9 L260.6,357.0 L261.3,355.9 L262.0,354.8 L262.7,353.5 L263.5,351.9 L264.3,350.2 L265.1,348.3 L265.9,346.3 L266.7,344.3 L267.4,342.4 L268.1,340.8 L268.8,339.4 L269.4,338.0 L270.1,336.7 L270.6,335.5 L271.2,334.6 L271.6,333.8 L271.9,333.5 L271.9,333.4 L271.6,333.5 L271.5,333.6 L271.5,333.6 L271.7,333.7 L272.1,333.9 L272.7,334.4 L273.3,335.2 L274.0,336.2 L274.8,337.5 L275.3,339.3 L276.3,341.2 L277.4,343.5 L278.5,346.0 L279.6,348.7 L280.7,351.4 L281.8,354.1 L282.7,356.7 L283.7,359.3 L284.6,362.2 L285.5,365.3 L286.4,368.4 L287.2,371.3 L288.0,373.9 L288.7,376.1 L289.4,377.7 L290.2,377.5 L290.2,375.8 L290.0,373.5 L289.7,370.8 L289.3,367.7 L288.9,364.6 L288.4,361.3 L287.9,358.2 L287.3,355.3 L286.6,352.6 L285.8,349.7 L285.0,346.8 L284.2,344.0 L283.3,341.2 L282.4,338.6 L281.5,336.3 L280.2,334.5 L279.2,332.9 L278.2,331.4 L277.2,330.2 L276.0,329.1 L274.8,328.3 L273.5,327.7 L272.0,327.4 L270.4,327.5 L268.7,328.1 L267.4,329.2 L266.5,330.3 L265.8,331.5 L265.1,332.7 L264.5,334.0 L263.9,335.3 L263.2,336.6 L262.5,338.2 L261.7,340.1 L260.9,342.0 L260.1,344.0 L259.3,345.9 L258.6,347.7 L257.9,349.3 L257.3,350.5 L256.7,351.6 L256.1,352.5 L255.5,353.3 L255.1,353.9 L254.7,354.3 L254.5,354.4 L254.5,354.5 L254.8,354.4 L255.1,354.4 L255.2,354.5 L255.0,354.3 L254.6,354.0 L254.2,353.4 L253.6,352.8 L253.1,352.1 L252.6,351.3 L252.2,350.6 L251.7,349.8 L251.3,348.8 L250.8,347.7 L250.4,346.6 L249.9,345.3 L249.4,344.1 L248.9,342.8 L248.3,341.4 L247.6,339.9 L247.0,338.4 L246.3,336.8 L245.7,335.3 L245.1,333.9 L244.6,332.8 L244.3,331.9Z" fill="#fff"/><circle cx="241.4" cy="333.1" r="3" fill="#fff"/>
<path d="M515.8,302.2 L515.9,303.2 L515.9,304.5 L516.0,306.1 L516.1,307.9 L516.3,309.8 L516.4,311.7 L516.6,313.5 L516.7,315.3 L516.9,317.0 L517.1,318.6 L517.2,320.3 L517.4,322.0 L517.7,323.7 L517.9,325.4 L518.2,327.0 L518.5,328.6 L518.8,330.1 L519.1,331.8 L519.4,333.5 L519.8,335.2 L520.2,336.8 L520.7,338.3 L521.4,339.7 L522.9,341.2 L525.5,341.6 L527.4,340.8 L528.4,339.7 L529.1,338.7 L529.8,337.5 L530.4,336.2 L531.1,334.8 L531.8,333.3 L532.6,331.4 L533.5,329.2 L534.3,326.7 L535.2,324.2 L536.1,321.7 L537.0,319.3 L537.9,317.2 L538.7,315.5 L539.6,313.9 L540.6,312.4 L541.6,310.9 L542.5,309.7 L543.4,308.7 L544.2,308.0 L544.8,307.6 L545.0,307.5 L545.0,307.5 L545.0,307.9 L545.4,308.1 L546.0,308.5 L546.7,309.2 L547.5,310.1 L548.4,311.3 L549.4,312.6 L550.3,314.1 L551.4,315.9 L552.5,318.0 L553.6,320.2 L554.6,322.5 L555.7,324.9 L556.6,327.3 L557.5,329.6 L558.3,332.0 L559.1,334.6 L559.8,337.4 L560.5,340.2 L561.2,342.9 L561.8,345.3 L562.4,347.3 L562.9,348.8 L563.7,348.6 L563.7,347.1 L563.6,345.0 L563.4,342.5 L563.2,339.7 L562.9,336.8 L562.5,333.9 L562.0,331.1 L561.5,328.4 L560.8,325.9 L560.1,323.3 L559.3,320.7 L558.4,318.2 L557.5,315.7 L556.6,313.4 L555.6,311.3 L554.6,309.4 L553.7,307.8 L552.7,306.3 L551.7,304.8 L550.6,303.6 L549.3,302.4 L547.7,301.5 L545.8,301.4 L543.8,301.5 L542.0,302.1 L540.4,303.1 L539.1,304.3 L537.8,305.7 L536.6,307.3 L535.4,308.9 L534.3,310.7 L533.3,312.5 L532.2,314.6 L531.2,317.0 L530.3,319.6 L529.3,322.2 L528.5,324.7 L527.6,327.1 L526.9,329.1 L526.2,330.7 L525.5,332.2 L524.9,333.5 L524.3,334.6 L523.9,335.4 L523.5,335.9 L523.6,335.9 L524.5,335.5 L526.1,335.8 L526.6,336.3 L526.5,336.0 L526.2,335.0 L525.8,333.7 L525.5,332.2 L525.2,330.6 L524.8,329.0 L524.5,327.4 L524.3,326.0 L524.0,324.5 L523.8,322.9 L523.6,321.3 L523.4,319.6 L523.2,318.0 L523.0,316.3 L522.9,314.7 L522.7,313.0 L522.6,311.2 L522.5,309.3 L522.3,307.5 L522.2,305.7 L522.1,304.2 L522.1,302.8 L522.0,301.8Z" fill="#fff"/><circle cx="518.9" cy="302" r="3" fill="#fff"/>
<circle cx="343.4" cy="335.3" r="22.4" fill="#962f22"/>
<circle cx="471.9" cy="324.5" r="22.7" fill="#962f22"/>
<path d="M377.6,340.9 L378.2,341.3 L378.9,341.9 L379.8,342.6 L380.8,343.3 L381.9,343.9 L383.0,344.5 L384.2,345.0 L385.5,345.5 L386.8,346.0 L388.2,346.3 L389.6,346.6 L391.0,346.6 L392.3,346.4 L393.7,346.0 L395.1,345.4 L396.4,344.8 L397.7,344.1 L399.0,343.5 L400.3,342.9 L401.5,342.1 L402.7,341.4 L403.9,340.7 L405.0,340.2 L406.2,339.9 L407.4,339.9 L408.5,340.2 L409.7,340.6 L410.8,341.0 L411.9,341.5 L413.0,342.0 L414.0,342.5 L415.1,343.1 L416.1,343.7 L417.0,344.2 L418.0,344.6 L418.9,344.7 L419.8,344.5 L420.7,344.1 L421.6,343.6 L422.5,342.9 L423.3,342.2 L424.0,341.5 L424.7,340.7 L425.3,339.8 L425.9,338.9 L426.4,338.0 L426.8,337.2 L427.1,336.7" fill="none" stroke="#9b2e21" stroke-width="3.8" stroke-linecap="round" stroke-linejoin="round"/>
<path d="M368.8,477.4 L368.8,476.8 L369.1,476.4 L368.9,476.3 L368.4,476.2 L367.6,476.0 L366.6,475.9 L365.4,475.7 L364.0,475.4 L362.4,475.1 L360.6,474.8 L358.7,474.5 L356.7,474.1 L354.4,473.6 L352.1,473.2 L349.6,472.6 L347.0,472.1 L344.3,471.5 L341.4,470.8 L338.5,470.3 L335.4,469.8 L332.2,469.2 L329.0,468.6 L325.7,468.0 L322.3,467.2 L318.8,466.5 L315.3,465.6 L311.7,464.8 L308.1,463.8 L304.5,462.8 L300.8,461.8 L297.2,460.6 L293.5,459.5 L289.8,458.2 L286.1,456.9 L282.4,455.5 L278.7,454.1 L275.1,452.6 L271.5,451.0 L268.0,449.4 L264.4,447.7 L261.0,445.9 L257.6,444.1 L254.3,442.2 L251.0,440.2 L247.8,438.1 L244.8,436.0 L241.8,433.8 L238.9,431.5 L236.2,429.2 L233.5,426.8 L231.0,424.3 L228.6,421.7 L226.4,419.1 L224.3,416.4 L222.3,413.6 L220.5,410.7 L218.8,407.8 L217.4,404.7 L216.0,401.6 L214.9,398.4 L214.1,395.8 L213.3,393.1 L212.5,390.5 L211.8,387.8 L211.1,385.1 L210.4,382.4 L209.8,379.7 L209.3,377.0 L208.7,374.3 L208.3,371.5 L207.8,368.8 L207.4,366.1 L207.1,363.3 L206.7,360.6 L206.4,357.8 L206.2,355.1 L206.0,352.3 L205.8,349.6 L205.7,346.8 L205.6,344.0 L205.6,341.3 L205.6,338.5 L205.6,335.7 L205.7,333.0 L205.9,330.2 L206.0,327.4 L206.2,324.7 L206.5,321.9 L206.8,319.2 L207.1,316.4 L207.5,313.7 L207.9,310.9 L208.3,308.2 L208.8,305.5 L209.3,302.8 L209.9,300.1 L210.5,297.4 L211.1,294.7 L211.8,292.0 L212.6,289.3 L213.3,286.6 L214.1,284.0 L215.0,281.3 L215.9,278.7 L216.8,276.1 L217.7,273.5 L218.7,270.9 L219.8,268.3 L220.8,265.8 L222.0,263.2 L223.1,260.7 L224.3,258.2 L225.5,255.7 L226.8,253.2 L228.1,250.7 L229.4,248.3 L230.8,245.9 L232.2,243.5 L233.6,241.1 L235.1,238.7 L236.6,236.4 L238.1,234.0 L239.7,231.7 L241.3,229.5 L243.0,227.2 L244.6,225.0 L246.3,222.8 L248.1,220.6 L249.9,218.4 L251.7,216.3 L253.5,214.2 L255.4,212.1 L257.3,210.0 L259.2,208.0 L261.2,206.0 L263.1,204.0 L265.2,202.1 L267.2,200.1 L269.3,198.2 L271.4,196.4 L273.5,194.6 L275.7,192.7 L277.8,191.0 L280.0,189.2 L282.3,187.5 L284.5,185.8 L286.8,184.2 L289.1,182.6 L291.5,181.0 L293.8,179.4 L296.2,177.9 L298.6,176.4 L301.0,175.0 L303.4,173.6 L305.9,172.2 L308.4,170.8 L310.9,169.5 L313.4,168.2 L315.9,167.0 L318.5,165.8 L321.1,164.6 L323.7,163.5 L326.3,162.4 L328.9,161.3 L331.5,160.3 L334.2,159.3 L336.9,158.4 L339.5,157.5 L342.2,156.6 L344.9,155.7 L347.7,154.9 L350.4,154.2 L353.1,153.5 L355.9,152.8 L358.7,152.1 L361.4,151.5 L364.2,150.9 L367.0,150.4 L369.8,149.9 L372.6,149.5 L375.4,149.1 L378.2,148.7 L381.0,148.3 L383.9,148.1 L386.7,147.8 L389.5,147.6 L392.4,147.4 L395.2,147.3 L398.0,147.2 L400.9,147.1 L403.7,147.1 L406.6,147.1 L409.4,147.2 L412.3,147.3 L415.1,147.4 L417.9,147.6 L420.8,147.8 L423.6,148.1 L426.4,148.4 L429.2,148.7 L432.0,149.1 L434.9,149.5 L437.7,150.0 L440.5,150.5 L443.2,151.0 L446.0,151.6 L448.8,152.2 L451.5,152.9 L454.3,153.6 L457.0,154.3 L459.8,155.1 L462.5,155.9 L465.2,156.7 L467.9,157.6 L470.6,158.5 L473.2,159.5 L475.9,160.5 L478.5,161.5 L481.1,162.6 L483.8,163.7 L486.3,164.8 L488.9,166.0 L491.5,167.2 L494.0,168.5 L496.5,169.7 L499.0,171.1 L501.5,172.4 L504.0,173.8 L506.4,175.2 L508.8,176.7 L511.2,178.2 L513.6,179.7 L515.9,181.2 L518.2,182.8 L520.5,184.5 L522.8,186.1 L525.1,187.8 L527.3,189.5 L529.5,191.3 L531.7,193.0 L533.8,194.8 L536.0,196.7 L538.1,198.6 L540.1,200.4 L542.2,202.4 L544.2,204.3 L546.2,206.3 L548.1,208.3 L550.0,210.4 L551.9,212.4 L553.8,214.5 L555.6,216.6 L557.4,218.8 L559.2,220.9 L560.9,223.1 L562.6,225.3 L564.3,227.6 L565.9,229.8 L567.6,232.1 L569.1,234.4 L570.7,236.7 L572.2,239.1 L573.6,241.5 L575.1,243.8 L576.5,246.3 L577.8,248.7 L579.1,251.1 L580.4,253.6 L581.7,256.1 L582.9,258.6 L584.1,261.1 L585.2,263.6 L586.3,266.2 L587.4,268.7 L588.4,271.3 L589.4,273.9 L590.4,276.5 L591.3,279.1 L592.2,281.8 L593.0,284.4 L593.8,287.1 L594.6,289.7 L595.3,292.4 L596.0,295.1 L596.6,297.8 L597.2,300.5 L597.8,303.2 L598.3,305.9 L598.8,308.6 L599.2,311.4 L599.6,314.1 L600.0,316.9 L600.3,319.6 L600.6,322.4 L600.8,325.1 L601.0,327.9 L601.2,330.6 L601.3,333.4 L601.4,336.2 L601.4,338.9 L601.4,341.7 L601.3,344.5 L601.3,347.2 L601.1,350.0 L601.0,352.8 L600.8,355.5 L600.5,358.3 L600.2,361.0 L599.9,363.8 L599.5,366.5 L599.1,369.3 L598.7,372.0 L598.2,374.7 L597.6,377.4 L597.1,380.1 L596.5,382.8 L595.8,385.5 L595.1,388.2 L594.4,390.9 L593.6,393.6 L592.8,396.4 L591.9,399.2 L591.0,401.9 L590.1,404.5 L589.2,407.0 L588.2,409.5 L587.3,411.9 L586.4,414.1 L585.4,416.3 L584.4,418.5 L583.4,420.6 L582.3,422.5 L581.3,424.5 L580.2,426.3 L579.1,428.1 L578.0,429.9 L576.9,431.5 L575.7,433.2 L574.5,434.7 L573.2,436.2 L572.0,437.7 L570.7,439.1 L569.3,440.5 L568.0,441.8 L566.5,443.1 L565.1,444.3 L563.6,445.6 L562.0,446.7 L560.4,447.9 L558.8,449.0 L557.1,450.1 L555.3,451.2 L553.5,452.2 L551.7,453.3 L549.7,454.3 L547.7,455.3 L545.7,456.2 L543.6,457.2 L541.4,458.1 L539.1,459.0 L536.8,459.9 L534.4,460.8 L532.0,461.7 L529.4,462.6 L526.8,463.5 L524.2,464.4 L521.4,465.2 L518.6,466.3 L515.8,467.3 L512.8,468.4 L509.8,469.4 L506.7,470.5 L503.5,471.7 L500.3,472.8 L496.9,474.0 L493.5,475.2 L490.0,476.5 L486.4,477.8 L482.8,479.3 L479.2,481.3 L479.6,482.7 L483.7,482.7 L487.6,482.2 L491.4,481.7 L495.1,481.1 L498.7,480.5 L502.2,479.8 L505.6,479.1 L508.9,478.5 L512.2,477.8 L515.3,477.1 L518.4,476.4 L521.5,475.7 L524.4,475.0 L527.3,474.1 L530.0,473.2 L532.7,472.3 L535.4,471.3 L538.0,470.4 L540.5,469.5 L542.9,468.5 L545.3,467.5 L547.7,466.5 L549.9,465.5 L552.2,464.4 L554.3,463.4 L556.5,462.3 L558.5,461.1 L560.5,460.0 L562.5,458.8 L564.4,457.5 L566.3,456.3 L568.1,454.9 L569.9,453.6 L571.6,452.2 L573.3,450.7 L574.9,449.2 L576.5,447.7 L578.1,446.1 L579.6,444.5 L581.0,442.8 L582.5,441.1 L583.8,439.3 L585.2,437.4 L586.5,435.5 L587.8,433.6 L589.0,431.5 L590.2,429.5 L591.4,427.3 L592.5,425.1 L593.6,422.9 L594.7,420.6 L595.7,418.2 L596.8,415.7 L597.8,413.2 L598.7,410.6 L599.7,407.9 L600.7,405.2 L601.6,402.3 L602.5,399.4 L603.4,396.4 L604.2,393.6 L605.0,390.8 L605.7,388.0 L606.4,385.2 L607.0,382.3 L607.6,379.5 L608.2,376.6 L608.7,373.7 L609.2,370.8 L609.6,368.0 L610.0,365.1 L610.4,362.2 L610.7,359.3 L610.9,356.4 L611.1,353.5 L611.3,350.5 L611.5,347.6 L611.5,344.7 L611.6,341.8 L611.6,338.9 L611.6,336.0 L611.5,333.0 L611.4,330.1 L611.2,327.2 L611.0,324.3 L610.7,321.4 L610.4,318.5 L610.1,315.6 L609.7,312.7 L609.3,309.8 L608.8,306.9 L608.3,304.1 L607.8,301.2 L607.2,298.3 L606.5,295.5 L605.9,292.7 L605.2,289.8 L604.4,287.0 L603.6,284.2 L602.8,281.4 L601.9,278.6 L600.9,275.8 L600.0,273.1 L599.0,270.3 L597.9,267.6 L596.8,264.9 L595.7,262.2 L594.6,259.5 L593.4,256.8 L592.1,254.2 L590.8,251.5 L589.5,248.9 L588.1,246.3 L586.8,243.8 L585.3,241.2 L583.8,238.7 L582.3,236.1 L580.8,233.7 L579.2,231.2 L577.6,228.7 L575.9,226.3 L574.2,223.9 L572.5,221.5 L570.8,219.2 L569.0,216.8 L567.1,214.5 L565.3,212.3 L563.4,210.0 L561.5,207.8 L559.5,205.6 L557.5,203.4 L555.5,201.3 L553.4,199.1 L551.3,197.1 L549.2,195.0 L547.1,193.0 L544.9,191.0 L542.7,189.0 L540.5,187.1 L538.2,185.2 L535.9,183.3 L533.6,181.5 L531.2,179.7 L528.9,177.9 L526.5,176.2 L524.1,174.5 L521.6,172.8 L519.1,171.1 L516.6,169.5 L514.1,168.0 L511.6,166.4 L509.0,165.0 L506.4,163.5 L503.8,162.1 L501.2,160.7 L498.6,159.3 L495.9,158.0 L493.2,156.7 L490.5,155.5 L487.8,154.3 L485.1,153.1 L482.3,152.0 L479.5,150.9 L476.7,149.9 L473.9,148.9 L471.1,147.9 L468.3,147.0 L465.5,146.1 L462.6,145.3 L459.7,144.5 L456.9,143.7 L454.0,143.0 L451.1,142.3 L448.2,141.6 L445.2,141.0 L442.3,140.5 L439.4,139.9 L436.4,139.5 L433.5,139.0 L430.5,138.6 L427.6,138.3 L424.6,137.9 L421.6,137.7 L418.6,137.4 L415.7,137.2 L412.7,137.1 L409.7,137.0 L406.7,136.9 L403.7,136.9 L400.8,136.9 L397.8,137.0 L394.8,137.1 L391.8,137.2 L388.8,137.4 L385.9,137.6 L382.9,137.9 L379.9,138.2 L377.0,138.6 L374.0,139.0 L371.0,139.4 L368.1,139.9 L365.2,140.4 L362.2,140.9 L359.3,141.5 L356.4,142.2 L353.5,142.8 L350.6,143.6 L347.7,144.3 L344.9,145.1 L342.0,146.0 L339.2,146.9 L336.3,147.8 L333.5,148.7 L330.7,149.7 L327.9,150.8 L325.1,151.8 L322.4,153.0 L319.6,154.1 L316.9,155.3 L314.2,156.5 L311.5,157.8 L308.9,159.1 L306.2,160.5 L303.6,161.8 L301.0,163.3 L298.4,164.7 L295.8,166.2 L293.3,167.7 L290.8,169.3 L288.3,170.9 L285.8,172.5 L283.3,174.2 L280.9,175.9 L278.5,177.6 L276.1,179.4 L273.8,181.2 L271.5,183.0 L269.2,184.9 L266.9,186.8 L264.7,188.7 L262.5,190.7 L260.3,192.7 L258.1,194.7 L256.0,196.7 L253.9,198.8 L251.8,200.9 L249.8,203.1 L247.8,205.2 L245.9,207.4 L243.9,209.6 L242.0,211.9 L240.2,214.2 L238.3,216.5 L236.5,218.8 L234.8,221.1 L233.0,223.5 L231.3,225.9 L229.7,228.3 L228.0,230.8 L226.5,233.3 L224.9,235.7 L223.4,238.3 L221.9,240.8 L220.5,243.3 L219.1,245.9 L217.7,248.5 L216.4,251.1 L215.1,253.8 L213.8,256.4 L212.6,259.1 L211.5,261.8 L210.3,264.5 L209.2,267.2 L208.2,269.9 L207.2,272.6 L206.2,275.4 L205.3,278.2 L204.4,281.0 L203.5,283.7 L202.7,286.6 L202.0,289.4 L201.2,292.2 L200.6,295.0 L199.9,297.9 L199.3,300.7 L198.8,303.6 L198.3,306.5 L197.8,309.4 L197.4,312.3 L197.0,315.1 L196.6,318.0 L196.3,320.9 L196.1,323.8 L195.8,326.8 L195.7,329.7 L195.5,332.6 L195.5,335.5 L195.4,338.4 L195.4,341.3 L195.4,344.2 L195.5,347.2 L195.7,350.1 L195.8,353.0 L196.0,355.9 L196.3,358.8 L196.6,361.7 L196.9,364.6 L197.3,367.5 L197.7,370.4 L198.2,373.3 L198.7,376.1 L199.3,379.0 L199.9,381.9 L200.5,384.7 L201.2,387.5 L201.9,390.4 L202.7,393.2 L203.5,396.0 L204.3,398.8 L205.2,401.6 L206.5,405.3 L208.1,409.0 L209.8,412.5 L211.7,415.9 L213.8,419.2 L216.1,422.4 L218.5,425.5 L221.0,428.5 L223.7,431.4 L226.5,434.2 L229.4,436.8 L232.5,439.4 L235.6,441.9 L238.8,444.3 L242.2,446.6 L245.6,448.8 L249.1,451.0 L252.6,453.0 L256.2,455.0 L259.9,456.8 L263.6,458.6 L267.3,460.4 L271.1,462.0 L274.9,463.6 L278.8,465.1 L282.6,466.5 L286.4,467.9 L290.3,469.2 L294.1,470.4 L297.9,471.5 L301.7,472.6 L305.5,473.7 L309.2,474.6 L312.9,475.6 L316.5,476.4 L320.1,477.2 L323.6,477.9 L327.0,478.6 L330.4,479.3 L333.6,479.9 L336.8,480.4 L339.9,480.8 L342.9,481.1 L345.8,481.2 L348.6,481.3 L351.2,481.4 L353.7,481.4 L356.0,481.4 L358.2,481.3 L360.2,481.3 L362.1,481.1 L363.8,481.0 L365.3,480.8 L366.7,480.5 L367.8,480.3 L368.8,480.0 L369.6,479.7 L370.3,479.3 L371.1,478.5 L371.2,477.6Z" fill="#9b2e21"/>
<defs><linearGradient id="tipL" gradientUnits="userSpaceOnUse" x1="340" y1="0" x2="370" y2="0"><stop offset="0" stop-color="#9b2e21" stop-opacity="0"/><stop offset="1" stop-color="#d49a6a"/></linearGradient>
<linearGradient id="tipR" gradientUnits="userSpaceOnUse" x1="520" y1="0" x2="480" y2="0"><stop offset="0" stop-color="#9b2e21" stop-opacity="0"/><stop offset="1" stop-color="#d49a6a"/></linearGradient></defs>
<rect x="335" y="465" width="40" height="20" fill="url(#tipL)" clip-path="url(#clipO)"/>
<rect x="476" y="462" width="48" height="24" fill="url(#tipR)" clip-path="url(#clipO)"/>
<clipPath id="clipO"><path d="M368.8,477.4 L368.8,476.8 L369.1,476.4 L368.9,476.3 L368.4,476.2 L367.6,476.0 L366.6,475.9 L365.4,475.7 L364.0,475.4 L362.4,475.1 L360.6,474.8 L358.7,474.5 L356.7,474.1 L354.4,473.6 L352.1,473.2 L349.6,472.6 L347.0,472.1 L344.3,471.5 L341.4,470.8 L338.5,470.3 L335.4,469.8 L332.2,469.2 L329.0,468.6 L325.7,468.0 L322.3,467.2 L318.8,466.5 L315.3,465.6 L311.7,464.8 L308.1,463.8 L304.5,462.8 L300.8,461.8 L297.2,460.6 L293.5,459.5 L289.8,458.2 L286.1,456.9 L282.4,455.5 L278.7,454.1 L275.1,452.6 L271.5,451.0 L268.0,449.4 L264.4,447.7 L261.0,445.9 L257.6,444.1 L254.3,442.2 L251.0,440.2 L247.8,438.1 L244.8,436.0 L241.8,433.8 L238.9,431.5 L236.2,429.2 L233.5,426.8 L231.0,424.3 L228.6,421.7 L226.4,419.1 L224.3,416.4 L222.3,413.6 L220.5,410.7 L218.8,407.8 L217.4,404.7 L216.0,401.6 L214.9,398.4 L214.1,395.8 L213.3,393.1 L212.5,390.5 L211.8,387.8 L211.1,385.1 L210.4,382.4 L209.8,379.7 L209.3,377.0 L208.7,374.3 L208.3,371.5 L207.8,368.8 L207.4,366.1 L207.1,363.3 L206.7,360.6 L206.4,357.8 L206.2,355.1 L206.0,352.3 L205.8,349.6 L205.7,346.8 L205.6,344.0 L205.6,341.3 L205.6,338.5 L205.6,335.7 L205.7,333.0 L205.9,330.2 L206.0,327.4 L206.2,324.7 L206.5,321.9 L206.8,319.2 L207.1,316.4 L207.5,313.7 L207.9,310.9 L208.3,308.2 L208.8,305.5 L209.3,302.8 L209.9,300.1 L210.5,297.4 L211.1,294.7 L211.8,292.0 L212.6,289.3 L213.3,286.6 L214.1,284.0 L215.0,281.3 L215.9,278.7 L216.8,276.1 L217.7,273.5 L218.7,270.9 L219.8,268.3 L220.8,265.8 L222.0,263.2 L223.1,260.7 L224.3,258.2 L225.5,255.7 L226.8,253.2 L228.1,250.7 L229.4,248.3 L230.8,245.9 L232.2,243.5 L233.6,241.1 L235.1,238.7 L236.6,236.4 L238.1,234.0 L239.7,231.7 L241.3,229.5 L243.0,227.2 L244.6,225.0 L246.3,222.8 L248.1,220.6 L249.9,218.4 L251.7,216.3 L253.5,214.2 L255.4,212.1 L257.3,210.0 L259.2,208.0 L261.2,206.0 L263.1,204.0 L265.2,202.1 L267.2,200.1 L269.3,198.2 L271.4,196.4 L273.5,194.6 L275.7,192.7 L277.8,191.0 L280.0,189.2 L282.3,187.5 L284.5,185.8 L286.8,184.2 L289.1,182.6 L291.5,181.0 L293.8,179.4 L296.2,177.9 L298.6,176.4 L301.0,175.0 L303.4,173.6 L305.9,172.2 L308.4,170.8 L310.9,169.5 L313.4,168.2 L315.9,167.0 L318.5,165.8 L321.1,164.6 L323.7,163.5 L326.3,162.4 L328.9,161.3 L331.5,160.3 L334.2,159.3 L336.9,158.4 L339.5,157.5 L342.2,156.6 L344.9,155.7 L347.7,154.9 L350.4,154.2 L353.1,153.5 L355.9,152.8 L358.7,152.1 L361.4,151.5 L364.2,150.9 L367.0,150.4 L369.8,149.9 L372.6,149.5 L375.4,149.1 L378.2,148.7 L381.0,148.3 L383.9,148.1 L386.7,147.8 L389.5,147.6 L392.4,147.4 L395.2,147.3 L398.0,147.2 L400.9,147.1 L403.7,147.1 L406.6,147.1 L409.4,147.2 L412.3,147.3 L415.1,147.4 L417.9,147.6 L420.8,147.8 L423.6,148.1 L426.4,148.4 L429.2,148.7 L432.0,149.1 L434.9,149.5 L437.7,150.0 L440.5,150.5 L443.2,151.0 L446.0,151.6 L448.8,152.2 L451.5,152.9 L454.3,153.6 L457.0,154.3 L459.8,155.1 L462.5,155.9 L465.2,156.7 L467.9,157.6 L470.6,158.5 L473.2,159.5 L475.9,160.5 L478.5,161.5 L481.1,162.6 L483.8,163.7 L486.3,164.8 L488.9,166.0 L491.5,167.2 L494.0,168.5 L496.5,169.7 L499.0,171.1 L501.5,172.4 L504.0,173.8 L506.4,175.2 L508.8,176.7 L511.2,178.2 L513.6,179.7 L515.9,181.2 L518.2,182.8 L520.5,184.5 L522.8,186.1 L525.1,187.8 L527.3,189.5 L529.5,191.3 L531.7,193.0 L533.8,194.8 L536.0,196.7 L538.1,198.6 L540.1,200.4 L542.2,202.4 L544.2,204.3 L546.2,206.3 L548.1,208.3 L550.0,210.4 L551.9,212.4 L553.8,214.5 L555.6,216.6 L557.4,218.8 L559.2,220.9 L560.9,223.1 L562.6,225.3 L564.3,227.6 L565.9,229.8 L567.6,232.1 L569.1,234.4 L570.7,236.7 L572.2,239.1 L573.6,241.5 L575.1,243.8 L576.5,246.3 L577.8,248.7 L579.1,251.1 L580.4,253.6 L581.7,256.1 L582.9,258.6 L584.1,261.1 L585.2,263.6 L586.3,266.2 L587.4,268.7 L588.4,271.3 L589.4,273.9 L590.4,276.5 L591.3,279.1 L592.2,281.8 L593.0,284.4 L593.8,287.1 L594.6,289.7 L595.3,292.4 L596.0,295.1 L596.6,297.8 L597.2,300.5 L597.8,303.2 L598.3,305.9 L598.8,308.6 L599.2,311.4 L599.6,314.1 L600.0,316.9 L600.3,319.6 L600.6,322.4 L600.8,325.1 L601.0,327.9 L601.2,330.6 L601.3,333.4 L601.4,336.2 L601.4,338.9 L601.4,341.7 L601.3,344.5 L601.3,347.2 L601.1,350.0 L601.0,352.8 L600.8,355.5 L600.5,358.3 L600.2,361.0 L599.9,363.8 L599.5,366.5 L599.1,369.3 L598.7,372.0 L598.2,374.7 L597.6,377.4 L597.1,380.1 L596.5,382.8 L595.8,385.5 L595.1,388.2 L594.4,390.9 L593.6,393.6 L592.8,396.4 L591.9,399.2 L591.0,401.9 L590.1,404.5 L589.2,407.0 L588.2,409.5 L587.3,411.9 L586.4,414.1 L585.4,416.3 L584.4,418.5 L583.4,420.6 L582.3,422.5 L581.3,424.5 L580.2,426.3 L579.1,428.1 L578.0,429.9 L576.9,431.5 L575.7,433.2 L574.5,434.7 L573.2,436.2 L572.0,437.7 L570.7,439.1 L569.3,440.5 L568.0,441.8 L566.5,443.1 L565.1,444.3 L563.6,445.6 L562.0,446.7 L560.4,447.9 L558.8,449.0 L557.1,450.1 L555.3,451.2 L553.5,452.2 L551.7,453.3 L549.7,454.3 L547.7,455.3 L545.7,456.2 L543.6,457.2 L541.4,458.1 L539.1,459.0 L536.8,459.9 L534.4,460.8 L532.0,461.7 L529.4,462.6 L526.8,463.5 L524.2,464.4 L521.4,465.2 L518.6,466.3 L515.8,467.3 L512.8,468.4 L509.8,469.4 L506.7,470.5 L503.5,471.7 L500.3,472.8 L496.9,474.0 L493.5,475.2 L490.0,476.5 L486.4,477.8 L482.8,479.3 L479.2,481.3 L479.6,482.7 L483.7,482.7 L487.6,482.2 L491.4,481.7 L495.1,481.1 L498.7,480.5 L502.2,479.8 L505.6,479.1 L508.9,478.5 L512.2,477.8 L515.3,477.1 L518.4,476.4 L521.5,475.7 L524.4,475.0 L527.3,474.1 L530.0,473.2 L532.7,472.3 L535.4,471.3 L538.0,470.4 L540.5,469.5 L542.9,468.5 L545.3,467.5 L547.7,466.5 L549.9,465.5 L552.2,464.4 L554.3,463.4 L556.5,462.3 L558.5,461.1 L560.5,460.0 L562.5,458.8 L564.4,457.5 L566.3,456.3 L568.1,454.9 L569.9,453.6 L571.6,452.2 L573.3,450.7 L574.9,449.2 L576.5,447.7 L578.1,446.1 L579.6,444.5 L581.0,442.8 L582.5,441.1 L583.8,439.3 L585.2,437.4 L586.5,435.5 L587.8,433.6 L589.0,431.5 L590.2,429.5 L591.4,427.3 L592.5,425.1 L593.6,422.9 L594.7,420.6 L595.7,418.2 L596.8,415.7 L597.8,413.2 L598.7,410.6 L599.7,407.9 L600.7,405.2 L601.6,402.3 L602.5,399.4 L603.4,396.4 L604.2,393.6 L605.0,390.8 L605.7,388.0 L606.4,385.2 L607.0,382.3 L607.6,379.5 L608.2,376.6 L608.7,373.7 L609.2,370.8 L609.6,368.0 L610.0,365.1 L610.4,362.2 L610.7,359.3 L610.9,356.4 L611.1,353.5 L611.3,350.5 L611.5,347.6 L611.5,344.7 L611.6,341.8 L611.6,338.9 L611.6,336.0 L611.5,333.0 L611.4,330.1 L611.2,327.2 L611.0,324.3 L610.7,321.4 L610.4,318.5 L610.1,315.6 L609.7,312.7 L609.3,309.8 L608.8,306.9 L608.3,304.1 L607.8,301.2 L607.2,298.3 L606.5,295.5 L605.9,292.7 L605.2,289.8 L604.4,287.0 L603.6,284.2 L602.8,281.4 L601.9,278.6 L600.9,275.8 L600.0,273.1 L599.0,270.3 L597.9,267.6 L596.8,264.9 L595.7,262.2 L594.6,259.5 L593.4,256.8 L592.1,254.2 L590.8,251.5 L589.5,248.9 L588.1,246.3 L586.8,243.8 L585.3,241.2 L583.8,238.7 L582.3,236.1 L580.8,233.7 L579.2,231.2 L577.6,228.7 L575.9,226.3 L574.2,223.9 L572.5,221.5 L570.8,219.2 L569.0,216.8 L567.1,214.5 L565.3,212.3 L563.4,210.0 L561.5,207.8 L559.5,205.6 L557.5,203.4 L555.5,201.3 L553.4,199.1 L551.3,197.1 L549.2,195.0 L547.1,193.0 L544.9,191.0 L542.7,189.0 L540.5,187.1 L538.2,185.2 L535.9,183.3 L533.6,181.5 L531.2,179.7 L528.9,177.9 L526.5,176.2 L524.1,174.5 L521.6,172.8 L519.1,171.1 L516.6,169.5 L514.1,168.0 L511.6,166.4 L509.0,165.0 L506.4,163.5 L503.8,162.1 L501.2,160.7 L498.6,159.3 L495.9,158.0 L493.2,156.7 L490.5,155.5 L487.8,154.3 L485.1,153.1 L482.3,152.0 L479.5,150.9 L476.7,149.9 L473.9,148.9 L471.1,147.9 L468.3,147.0 L465.5,146.1 L462.6,145.3 L459.7,144.5 L456.9,143.7 L454.0,143.0 L451.1,142.3 L448.2,141.6 L445.2,141.0 L442.3,140.5 L439.4,139.9 L436.4,139.5 L433.5,139.0 L430.5,138.6 L427.6,138.3 L424.6,137.9 L421.6,137.7 L418.6,137.4 L415.7,137.2 L412.7,137.1 L409.7,137.0 L406.7,136.9 L403.7,136.9 L400.8,136.9 L397.8,137.0 L394.8,137.1 L391.8,137.2 L388.8,137.4 L385.9,137.6 L382.9,137.9 L379.9,138.2 L377.0,138.6 L374.0,139.0 L371.0,139.4 L368.1,139.9 L365.2,140.4 L362.2,140.9 L359.3,141.5 L356.4,142.2 L353.5,142.8 L350.6,143.6 L347.7,144.3 L344.9,145.1 L342.0,146.0 L339.2,146.9 L336.3,147.8 L333.5,148.7 L330.7,149.7 L327.9,150.8 L325.1,151.8 L322.4,153.0 L319.6,154.1 L316.9,155.3 L314.2,156.5 L311.5,157.8 L308.9,159.1 L306.2,160.5 L303.6,161.8 L301.0,163.3 L298.4,164.7 L295.8,166.2 L293.3,167.7 L290.8,169.3 L288.3,170.9 L285.8,172.5 L283.3,174.2 L280.9,175.9 L278.5,177.6 L276.1,179.4 L273.8,181.2 L271.5,183.0 L269.2,184.9 L266.9,186.8 L264.7,188.7 L262.5,190.7 L260.3,192.7 L258.1,194.7 L256.0,196.7 L253.9,198.8 L251.8,200.9 L249.8,203.1 L247.8,205.2 L245.9,207.4 L243.9,209.6 L242.0,211.9 L240.2,214.2 L238.3,216.5 L236.5,218.8 L234.8,221.1 L233.0,223.5 L231.3,225.9 L229.7,228.3 L228.0,230.8 L226.5,233.3 L224.9,235.7 L223.4,238.3 L221.9,240.8 L220.5,243.3 L219.1,245.9 L217.7,248.5 L216.4,251.1 L215.1,253.8 L213.8,256.4 L212.6,259.1 L211.5,261.8 L210.3,264.5 L209.2,267.2 L208.2,269.9 L207.2,272.6 L206.2,275.4 L205.3,278.2 L204.4,281.0 L203.5,283.7 L202.7,286.6 L202.0,289.4 L201.2,292.2 L200.6,295.0 L199.9,297.9 L199.3,300.7 L198.8,303.6 L198.3,306.5 L197.8,309.4 L197.4,312.3 L197.0,315.1 L196.6,318.0 L196.3,320.9 L196.1,323.8 L195.8,326.8 L195.7,329.7 L195.5,332.6 L195.5,335.5 L195.4,338.4 L195.4,341.3 L195.4,344.2 L195.5,347.2 L195.7,350.1 L195.8,353.0 L196.0,355.9 L196.3,358.8 L196.6,361.7 L196.9,364.6 L197.3,367.5 L197.7,370.4 L198.2,373.3 L198.7,376.1 L199.3,379.0 L199.9,381.9 L200.5,384.7 L201.2,387.5 L201.9,390.4 L202.7,393.2 L203.5,396.0 L204.3,398.8 L205.2,401.6 L206.5,405.3 L208.1,409.0 L209.8,412.5 L211.7,415.9 L213.8,419.2 L216.1,422.4 L218.5,425.5 L221.0,428.5 L223.7,431.4 L226.5,434.2 L229.4,436.8 L232.5,439.4 L235.6,441.9 L238.8,444.3 L242.2,446.6 L245.6,448.8 L249.1,451.0 L252.6,453.0 L256.2,455.0 L259.9,456.8 L263.6,458.6 L267.3,460.4 L271.1,462.0 L274.9,463.6 L278.8,465.1 L282.6,466.5 L286.4,467.9 L290.3,469.2 L294.1,470.4 L297.9,471.5 L301.7,472.6 L305.5,473.7 L309.2,474.6 L312.9,475.6 L316.5,476.4 L320.1,477.2 L323.6,477.9 L327.0,478.6 L330.4,479.3 L333.6,479.9 L336.8,480.4 L339.9,480.8 L342.9,481.1 L345.8,481.2 L348.6,481.3 L351.2,481.4 L353.7,481.4 L356.0,481.4 L358.2,481.3 L360.2,481.3 L362.1,481.1 L363.8,481.0 L365.3,480.8 L366.7,480.5 L367.8,480.3 L368.8,480.0 L369.6,479.7 L370.3,479.3 L371.1,478.5 L371.2,477.6Z"/></clipPath>
<path d="M350.6,482.8 L349.5,484.2 L348.1,486.3 L346.5,488.7 L344.8,491.5 L343.2,494.3 L341.7,497.2 L340.4,500.2 L339.1,503.6 L337.8,507.1 L336.7,510.3 L335.8,513.1 L335.1,515.0 L342.9,517.0 L343.2,515.0 L343.7,512.1 L344.3,508.8 L344.9,505.3 L345.6,501.8 L346.3,498.8 L347.1,496.0 L348.1,493.0 L349.1,490.0 L350.1,487.3 L350.9,485.0 L351.4,483.2Z" fill="#9b2e21"/>
<path d="M487.5,489.2 L487.8,490.6 L488.3,492.5 L488.9,494.6 L489.6,497.0 L490.2,499.4 L490.8,501.7 L491.2,504.2 L491.7,507.1 L492.1,510.1 L492.5,512.9 L492.9,515.3 L493.1,517.0 L500.9,515.0 L500.3,513.4 L499.5,511.1 L498.5,508.4 L497.4,505.6 L496.3,502.8 L495.2,500.3 L494.1,497.9 L492.9,495.7 L491.6,493.5 L490.4,491.5 L489.3,489.9 L488.5,488.8Z" fill="#9b2e21"/>
<path d="M384,211 C375,215 355,213 350,203 C346,194 352,186.5 361,188 C372,190 381,200 384,211 Z" fill="#5ce67e"/>
<path d="M383,211 C378,203 379,186 389,179.5 C397,175 406,180 405,190 C404,200 394,208 383,211 Z" fill="#5ce67e"/>
<path d="M381.7,208.5 L382.0,209.8 L382.5,211.7 L383.1,213.8 L383.7,216.1 L384.3,218.3 L384.6,220.3 L384.9,222.1 L385.0,223.9 L385.1,225.7 L385.2,227.4 L385.2,229.2 L385.1,230.9 L385.0,232.7 L384.7,234.7 L384.5,236.6 L384.4,238.5 L384.4,240.1 L384.4,241.3 L386.6,241.7 L387.0,240.6 L387.5,239.1 L388.1,237.2 L388.5,235.2 L388.7,233.1 L388.9,231.1 L389.0,229.2 L389.0,227.4 L388.9,225.5 L388.8,223.6 L388.6,221.7 L388.4,219.7 L388.0,217.5 L387.4,215.2 L386.8,212.8 L386.2,210.6 L385.7,208.8 L385.3,207.5Z" fill="#5ce67e"/>
<circle cx="385.6" cy="241" r="1.6" fill="#5ce67e"/>
</svg>
<span class="a t" style="left:655px;top:158.5px;font-size:22px;line-height:22px;color:#a62420;-webkit-text-stroke:1px #a62420;letter-spacing:1.3px;transform:scaleX(0.915)">@Pikachu2009</span>
<span class="a t" style="left:653.5px;top:182.5px;font-size:21.5px;line-height:21.5px;color:#a62420;-webkit-text-stroke:1px #a62420;letter-spacing:1.3px;transform:scaleX(0.93)">#Hoidap247</span>
<div class="a" style="left:837px;top:72px;width:15px;height:443px;background:linear-gradient(to right,#2e2e2e,#3a3a3a)"></div>
<svg class="a" style="left:837px;top:72px" width="15" height="443" viewBox="0 0 15 443"><path d="M7.5,1.5 L3.5,6.5 H11.5Z M7.5,442 L3.5,437 H11.5Z" fill="#aaa"/></svg>
<div class="a" style="left:838px;top:239px;width:13px;height:60px;background:#6a6a6a;border-radius:3px"></div>
<div class="a" style="left:130px;top:515px;width:707px;height:15px;background:linear-gradient(#3a3a3a,#262626)"></div>
<div class="a" style="left:130px;top:515px;width:12px;height:15px;border:1px solid #3e4a52;background:#2c2c2c"></div>
<svg class="a" style="left:130px;top:515px" width="12" height="15" viewBox="0 0 12 15"><path d="M2.5,7.5 L7.5,3.5 V11.5Z" fill="#aaa"/></svg>
<div class="a" style="left:417px;top:516px;width:110px;height:13px;background:#6b6b6b;border-radius:3px"></div>
<div class="a" style="left:837px;top:515px;width:15px;height:15px;background:#262626"></div>
<svg class="a" style="left:837px;top:515px" width="15" height="15" viewBox="0 0 15 15"><path d="M13,7.5 L8,3.5 V11.5Z" fill="#aaa"/></svg>
<div class="a" style="left:130px;top:529px;width:722px;height:1px;background:#3e4448"></div>
<div class="a" style="left:852px;top:57px;width:172px;height:473px;background:#1d1d1d"></div>
<div class="a" style="left:856px;top:57px;width:168px;height:1px;background:#6a8ca0"></div>
<div class="a" style="left:856px;top:58px;width:168px;height:14px;background:linear-gradient(#3a3b3f,#383434)"></div>
<span class="a t" style="left:922.2px;top:60.8px;font-size:9.5px;line-height:9.5px;color:#cfcfcf;font-weight:400;font-family:'Liberation Sans',sans-serif;transform:scaleX(0.762);">Lớp</span>
<svg class="a" style="left:1000px;top:60px" width="9" height="9" viewBox="0 0 9 9"><path d="M5,2 H1 V8 H7 V4.5" fill="none" stroke="#c8c8c8" stroke-width="1.1"/><path d="M3.5,5.5 L7,2 M5.5,0.5 H8.5 V3.5Z" fill="#d8d8d8" stroke="#d8d8d8" stroke-width="1"/></svg>
<svg class="a" style="left:1013px;top:60px" width="9" height="9" viewBox="0 0 9 9"><path d="M1.5,1.5 L7.5,7.5 M7.5,1.5 L1.5,7.5" stroke="#dedede" stroke-width="2"/></svg>
<div class="a" style="left:856px;top:72px;width:168px;height:273px;background:#232323"></div>
<span class="a t" style="left:860.2px;top:79.2px;font-size:9.5px;line-height:9.5px;color:#d0d0d0;font-weight:400;font-family:'Liberation Sans',sans-serif;transform:scaleX(0.961);">Độ trong</span>
<div class="a" style="left:901px;top:77px;width:90px;height:12px;background:linear-gradient(to right,#8cc8f8,#4a9be0)"></div>
<span class="a t" style="left:996px;top:79.2px;font-size:9.5px;line-height:9.5px;color:#d0d0d0;font-weight:400;font-family:'Liberation Sans',sans-serif;transform:scaleX(0.854);">100 %</span>
<span class="a t" style="left:860.2px;top:98.2px;font-size:9.5px;line-height:9.5px;color:#d0d0d0;font-weight:400;font-family:'Liberation Sans',sans-serif;transform:scaleX(0.919);">Pha trộn</span>
<div class="a" style="left:904px;top:94px;width:115px;height:16px;background:#3c3c3c;border-radius:2px"></div>
<span class="a t" style="left:906px;top:97.8px;font-size:9.5px;line-height:9.5px;color:#d8d8d8;font-weight:400;font-family:'Liberation Sans',sans-serif;transform:scaleX(0.826);">Bình thường</span>
<svg class="a" style="left:1009px;top:99px" width="8" height="6" viewBox="0 0 8 6"><path d="M1,1 H7 L4,4Z" fill="#aaa"/></svg>
<div class="a" style="left:863px;top:118px;width:8px;height:8px;border:1px solid #555"></div>
<span class="a t" style="left:875px;top:117.2px;font-size:9.5px;line-height:9.5px;color:#6a6a6a;font-weight:400;font-family:'Liberation Sans',sans-serif;transform:scaleX(0.847);">Bảo vệ alpha</span>
<div class="a" style="left:931px;top:117px;width:9px;height:9px;border:1px solid #d8d8d8"></div>
<span class="a t" style="left:943.5px;top:117.2px;font-size:9.5px;line-height:9.5px;color:#d8d8d8;font-weight:400;font-family:'Liberation Sans',sans-serif;transform:scaleX(0.816);">Xén bớt</span>
<div class="a" style="left:980px;top:117px;width:9px;height:9px;border:1px solid #d8d8d8"></div>
<span class="a t" style="left:993px;top:117.2px;font-size:9.5px;line-height:9.5px;color:#d8d8d8;font-weight:400;font-family:'Liberation Sans',sans-serif;transform:scaleX(0.811);">Khóa</span>
<div class="a" style="left:857px;top:132px;width:150px;height:213px;background:#4a4847"></div>
<div class="a" style="left:858px;top:133px;width:14px;height:29px;background:#5a5857"></div>
<div class="a" style="left:872px;top:133px;width:135px;height:29px;background:#4d9cdc"></div>
<div class="a" style="left:858px;top:163px;width:149px;height:28px;background:#5a5857"></div>
<div class="a" style="left:857px;top:191px;width:150px;height:1px;background:#333"></div>
<svg class="a" style="left:860px;top:141px" width="10" height="10" viewBox="0 0 10 10"><circle cx="5" cy="5" r="3.8" fill="#d8d8d8"/></svg>
<svg class="a" style="left:860px;top:172px" width="10" height="10" viewBox="0 0 10 10"><circle cx="5" cy="5" r="3.8" fill="#d8d8d8"/></svg>
<div class="a" style="left:883px;top:144px;width:27px;height:7px;background:#fff"></div>
<svg class="a" style="left:883px;top:144px" width="27" height="7" viewBox="0 0 27 7"><rect x="1" y="1" width="25" height="5" fill="#c0392b" opacity="0.85"/><path d="M2,3.5 H25" stroke="#fff" stroke-width="0.8" stroke-dasharray="2 1"/></svg>
<div class="a" style="left:883px;top:168px;width:27px;height:19px;background:#fdefb6"></div>
<span class="a t" style="left:922.2px;top:142.5px;font-size:10px;line-height:10px;color:#fff;font-weight:700;font-family:'Liberation Sans',sans-serif;transform:scaleX(0.966);">@Pikachu2009</span>
<span class="a t" style="left:922.5px;top:172.5px;font-size:10px;line-height:10px;color:#f0f0f0;font-weight:400;font-family:'Liberation Sans',sans-serif;transform:scaleX(0.839);">Lớp1</span>
<svg class="a" style="left:990px;top:140px" width="15" height="15" viewBox="0 0 15 15"><circle cx="7.5" cy="7.5" r="4" fill="#fff"/><path d="M7.5,1 V14 M1,7.5 H14 M2.9,2.9 L12.1,12.1 M12.1,2.9 L2.9,12.1" stroke="#fff" stroke-width="2.2"/><circle cx="7.5" cy="7.5" r="1.8" fill="#4d9cdc"/></svg>
<div class="a" style="left:1008px;top:133px;width:15px;height:212px;background:#2a2a2a"></div>
<svg class="a" style="left:1008px;top:133px" width="15" height="12" viewBox="0 0 15 12"><path d="M7.5,2 L3.5,7 H11.5Z" fill="#aaa"/></svg>
<div class="a" style="left:1009px;top:141px;width:13px;height:194px;background:#626262;border-radius:5px"></div>
<svg class="a" style="left:1008px;top:334px" width="15" height="12" viewBox="0 0 15 12"><path d="M7.5,9 L3.5,4 H11.5Z" fill="#aaa"/></svg>
<div class="a" style="left:856px;top:345px;width:168px;height:23px;background:#232323"></div>
<div class="a" style="left:861px;top:348px;width:17px;height:16px;background:#3a3a3a;border-radius:3px"></div>
<div class="a" style="left:881px;top:348px;width:17px;height:16px;background:#3a3a3a;border-radius:3px"></div>
<div class="a" style="left:901px;top:348px;width:17px;height:16px;background:#3a3a3a;border-radius:3px"></div>
<div class="a" style="left:921px;top:348px;width:23px;height:16px;background:#3a3a3a;border-radius:3px"></div>
<div class="a" style="left:947px;top:348px;width:17px;height:16px;background:#3a3a3a;border-radius:3px"></div>
<div class="a" style="left:972px;top:348px;width:17px;height:16px;background:#3a3a3a;border-radius:3px"></div>
<div class="a" style="left:993px;top:348px;width:17px;height:16px;background:#151515;border:1px solid #444"></div>
<div class="a" style="left:968px;top:350px;width:1px;height:12px;background:#555"></div>
<div class="a" style="left:1015px;top:348px;width:5px;height:16px;background:#3a3a3a;border-radius:2px"></div>
<svg class="a" style="left:861px;top:348px" width="17" height="16" viewBox="0 0 17 16"><path d="M5,3 H10 L12.5,5.5 V13.5 H5Z" fill="none" stroke="#ddd" stroke-width="1.1"/></svg>
<svg class="a" style="left:881px;top:348px" width="17" height="16" viewBox="0 0 17 16"><path d="M5,3 H10 L12.5,5.5 V13.5 H5Z" fill="none" stroke="#ddd" stroke-width="1.1"/><rect x="7" y="7.5" width="3.5" height="3.5" fill="none" stroke="#ddd" stroke-width="0.9"/></svg>
<svg class="a" style="left:901px;top:348px" width="17" height="16" viewBox="0 0 17 16"><path d="M5,3 H10 L12.5,5.5 V13.5 H5Z" fill="none" stroke="#ddd" stroke-width="1.1"/><path d="M8,7.5 L9,7 V12" stroke="#ddd" stroke-width="1"/></svg>
<svg class="a" style="left:921px;top:348px" width="23" height="16" viewBox="0 0 23 16"><path d="M4,3 H9 L11.5,5.5 V13.5 H4Z" fill="none" stroke="#ddd" stroke-width="1.1"/><path d="M10,11 H14 M12,9 V13" stroke="#ddd" stroke-width="1.3"/><path d="M16,7 H21 L18.5,10Z" fill="#eee"/></svg>
<svg class="a" style="left:947px;top:348px" width="17" height="16" viewBox="0 0 17 16"><path d="M2.5,4 H7 L8,5.5 H14.5 V13 H2.5Z" fill="#ddd"/></svg>
<svg class="a" style="left:972px;top:348px" width="17" height="16" viewBox="0 0 17 16"><rect x="3.5" y="5.5" width="8" height="8" fill="none" stroke="#ddd" stroke-width="1.1"/><path d="M5.5,5.5 V3.5 H13.5 V11.5 H11.5" fill="none" stroke="#ddd" stroke-width="1.1"/></svg>
<svg class="a" style="left:993px;top:348px" width="17" height="16" viewBox="0 0 17 16"><rect x="3" y="3" width="5" height="4" fill="none" stroke="#eee" stroke-width="1"/><rect x="3" y="9" width="5" height="4" fill="#eee"/><rect x="10" y="6" width="5" height="5" fill="#eee"/></svg>
<div class="a" style="left:856px;top:368px;width:168px;height:6px;background:#1d1d1d"></div>
<div class="a" style="left:856px;top:374px;width:168px;height:1px;background:#6a8ca0"></div>
<div class="a" style="left:856px;top:375px;width:168px;height:14px;background:linear-gradient(#3a3b3f,#383434)"></div>
<span class="a t" style="left:913px;top:377.8px;font-size:9.5px;line-height:9.5px;color:#cfcfcf;font-weight:400;font-family:'Liberation Sans',sans-serif;transform:scaleX(0.848);">Hoa tiêu</span>
<svg class="a" style="left:1000px;top:377px" width="9" height="9" viewBox="0 0 9 9"><path d="M5,2 H1 V8 H7 V4.5" fill="none" stroke="#c8c8c8" stroke-width="1.1"/><path d="M3.5,5.5 L7,2 M5.5,0.5 H8.5 V3.5Z" fill="#d8d8d8" stroke="#d8d8d8" stroke-width="1"/></svg>
<svg class="a" style="left:1013px;top:377px" width="9" height="9" viewBox="0 0 9 9"><path d="M1.5,1.5 L7.5,7.5 M7.5,1.5 L1.5,7.5" stroke="#dedede" stroke-width="2"/></svg>
<div class="a" style="left:856px;top:389px;width:168px;height:47px;background:#232323"></div>
<div class="a" style="left:859px;top:392px;width:17px;height:18px;background:#3a3a3a;border-radius:3px"></div>
<div class="a" style="left:884px;top:392px;width:18px;height:18px;background:#3a3a3a;border-radius:3px"></div>
<div class="a" style="left:905px;top:392px;width:17px;height:18px;background:#3a3a3a;border-radius:3px"></div>
<div class="a" style="left:925px;top:392px;width:17px;height:18px;background:#3a3a3a;border-radius:3px"></div>
<div class="a" style="left:950px;top:392px;width:17px;height:18px;background:#3a3a3a;border-radius:3px"></div>
<div class="a" style="left:971px;top:392px;width:17px;height:18px;background:#151515;border:1px solid #444"></div>
<div class="a" style="left:991px;top:392px;width:17px;height:18px;background:#3a3a3a;border-radius:3px"></div>
<div class="a" style="left:880px;top:395px;width:1px;height:12px;background:#555"></div>
<div class="a" style="left:946px;top:395px;width:1px;height:12px;background:#555"></div>
<div class="a" style="left:1016px;top:392px;width:6px;height:18px;background:#3a3a3a;border-radius:2px"></div>
<svg class="a" style="left:859px;top:392px" width="17" height="18" viewBox="0 0 17 18"><circle cx="7.5" cy="7.5" r="4.5" fill="none" stroke="#ddd" stroke-width="1.3"/><path d="M11,11 L14.5,14.5" stroke="#ddd" stroke-width="2"/><path d="M7,5.5 L8,5 V10" stroke="#ddd" stroke-width="1"/></svg>
<svg class="a" style="left:884px;top:392px" width="18" height="18" viewBox="0 0 18 18"><circle cx="7.5" cy="7.5" r="4.5" fill="none" stroke="#ddd" stroke-width="1.3"/><path d="M11,11 L14.5,14.5" stroke="#ddd" stroke-width="2"/><path d="M5,7.5 H10 M7.5,5 V10" stroke="#ddd" stroke-width="1.2"/></svg>
<svg class="a" style="left:905px;top:392px" width="17" height="18" viewBox="0 0 17 18"><rect x="2.5" y="3.5" width="12" height="11" fill="#888" stroke="#ddd" stroke-width="1"/><path d="M4,5 L13,13 M13,5 L4,13" stroke="#333" stroke-width="1.5"/></svg>
<svg class="a" style="left:925px;top:392px" width="17" height="18" viewBox="0 0 17 18"><circle cx="7.5" cy="7.5" r="4.5" fill="none" stroke="#ddd" stroke-width="1.3"/><path d="M11,11 L14.5,14.5" stroke="#ddd" stroke-width="2"/><path d="M5,7.5 H10" stroke="#ddd" stroke-width="1.2"/></svg>
<svg class="a" style="left:950px;top:392px" width="17" height="18" viewBox="0 0 17 18"><circle cx="8.5" cy="9" r="5.2" fill="none" stroke="#ddd" stroke-width="1.4"/><rect x="6" y="6.5" width="5" height="5" fill="#ddd" transform="rotate(20 8.5 9)"/></svg>
<svg class="a" style="left:971px;top:392px" width="17" height="18" viewBox="0 0 17 18"><rect x="4.5" y="5" width="8" height="8" fill="#eee"/><path d="M3,3.5 L5.5,6 M14,3.5 L11.5,6 M3,14.5 L5.5,12 M14,14.5 L11.5,12" stroke="#eee" stroke-width="1.4"/></svg>
<svg class="a" style="left:991px;top:392px" width="17" height="18" viewBox="0 0 17 18"><circle cx="8.5" cy="9" r="5.2" fill="none" stroke="#ddd" stroke-width="1.4"/><rect x="6" y="6.5" width="5" height="5" fill="#ddd" transform="rotate(-20 8.5 9)"/></svg>
<div class="a" style="left:858px;top:419px;width:141px;height:7px;background:#3d3d3d;border-radius:4px"></div>
<svg class="a" style="left:922px;top:416px" width="13" height="13" viewBox="0 0 13 13"><circle cx="6.5" cy="6.5" r="5.5" fill="#bdbdbd"/></svg>
<span class="a t" style="left:1006.7px;top:417.2px;font-size:9.5px;line-height:9.5px;color:#d0d0d0;font-weight:400;font-family:'Liberation Sans',sans-serif;transform:scaleX(0.973);">0 độ</span>
<div class="a" style="left:856px;top:432px;width:168px;height:1px;background:#3a3535"></div>
<svg class="a" style="left:937px;top:431px" width="6" height="4" viewBox="0 0 6 4"><circle cx="1.5" cy="2" r="1.2" fill="#e22"/><circle cx="4.5" cy="2" r="1.2" fill="#e22"/></svg>
<div class="a" style="left:856px;top:438px;width:168px;height:1px;background:#6a8ca0"></div>
<div class="a" style="left:856px;top:439px;width:168px;height:14px;background:linear-gradient(#3a3b3f,#383434)"></div>
<span class="a t" style="left:910.4px;top:441.8px;font-size:9.5px;line-height:9.5px;color:#cfcfcf;font-weight:400;font-family:'Liberation Sans',sans-serif;transform:scaleX(0.795);">Brush Size</span>
<svg class="a" style="left:1000px;top:441px" width="9" height="9" viewBox="0 0 9 9"><path d="M5,2 H1 V8 H7 V4.5" fill="none" stroke="#c8c8c8" stroke-width="1.1"/><path d="M3.5,5.5 L7,2 M5.5,0.5 H8.5 V3.5Z" fill="#d8d8d8" stroke="#d8d8d8" stroke-width="1"/></svg>
<svg class="a" style="left:1013px;top:441px" width="9" height="9" viewBox="0 0 9 9"><path d="M1.5,1.5 L7.5,7.5 M7.5,1.5 L1.5,7.5" stroke="#dedede" stroke-width="2"/></svg>
<div class="a" style="left:856px;top:453px;width:168px;height:77px;background:#232323"></div>
<div class="a" style="left:857px;top:453px;width:152px;height:77px;background:#555"></div>
<div class="a" style="left:886px;top:453px;width:1px;height:77px;background:#3c3c3c"></div>
<div class="a" style="left:916px;top:453px;width:1px;height:77px;background:#3c3c3c"></div>
<div class="a" style="left:946px;top:453px;width:1px;height:77px;background:#3c3c3c"></div>
<div class="a" style="left:976px;top:453px;width:1px;height:77px;background:#3c3c3c"></div>
<div class="a" style="left:857px;top:472px;width:152px;height:1px;background:#3c3c3c"></div>
<div class="a" style="left:857px;top:510px;width:152px;height:1px;background:#3c3c3c"></div>
<span class="a t" style="left:868.3px;top:463.5px;font-size:8px;line-height:8px;color:#e8e8e8;font-weight:400;font-family:'Liberation Sans',sans-serif;transform:scaleX(1.123);">1</span>
<span class="a t" style="left:868.3px;top:501.3px;font-size:8px;line-height:8px;color:#e8e8e8;font-weight:400;font-family:'Liberation Sans',sans-serif;transform:scaleX(1.123);">5</span>
<span class="a t" style="left:894.9px;top:463.5px;font-size:8px;line-height:8px;color:#e8e8e8;font-weight:400;font-family:'Liberation Sans',sans-serif;transform:scaleX(1.079);">1.5</span>
<span class="a t" style="left:898.4px;top:501.3px;font-size:8px;line-height:8px;color:#e8e8e8;font-weight:400;font-family:'Liberation Sans',sans-serif;transform:scaleX(1.123);">7</span>
<span class="a t" style="left:928.6px;top:463.5px;font-size:8px;line-height:8px;color:#e8e8e8;font-weight:400;font-family:'Liberation Sans',sans-serif;transform:scaleX(1.123);">2</span>
<span class="a t" style="left:926.1px;top:501.3px;font-size:8px;line-height:8px;color:#e8e8e8;font-weight:400;font-family:'Liberation Sans',sans-serif;transform:scaleX(1.123);">10</span>
<span class="a t" style="left:958.6px;top:463.5px;font-size:8px;line-height:8px;color:#e8e8e8;font-weight:400;font-family:'Liberation Sans',sans-serif;transform:scaleX(1.123);">3</span>
<span class="a t" style="left:956.1px;top:501.3px;font-size:8px;line-height:8px;color:#e8e8e8;font-weight:400;font-family:'Liberation Sans',sans-serif;transform:scaleX(1.123);">12</span>
<span class="a t" style="left:988.5px;top:463.5px;font-size:8px;line-height:8px;color:#e8e8e8;font-weight:400;font-family:'Liberation Sans',sans-serif;transform:scaleX(1.123);">4</span>
<span class="a t" style="left:986.0px;top:501.3px;font-size:8px;line-height:8px;color:#e8e8e8;font-weight:400;font-family:'Liberation Sans',sans-serif;transform:scaleX(1.123);">15</span>
<svg class="a" style="left:856px;top:453px" width="153" height="77" viewBox="0 0 153 77"><circle cx="14.8" cy="34.4" r="2" fill="#f0f0f0"/><circle cx="14.8" cy="71.4" r="7.5" fill="#f0f0f0"/><circle cx="44.9" cy="34.4" r="2.5" fill="#f0f0f0"/><circle cx="44.9" cy="71.4" r="9" fill="#f0f0f0"/><circle cx="75.1" cy="34.4" r="3.5" fill="#f0f0f0"/><circle cx="75.1" cy="71.4" r="9" fill="#f0f0f0"/><circle cx="105.1" cy="34.4" r="4.5" fill="#f0f0f0"/><circle cx="105.1" cy="71.4" r="9" fill="#f0f0f0"/><circle cx="135.0" cy="34.4" r="5.5" fill="#f0f0f0"/><circle cx="135.0" cy="71.4" r="9" fill="#f0f0f0"/></svg>
<div class="a" style="left:1009px;top:453px;width:15px;height:77px;background:#2a2a2a"></div>
<svg class="a" style="left:1009px;top:453px" width="15" height="77" viewBox="0 0 15 77"><path d="M7.5,2 L3.5,7 H11.5Z M7.5,76 L3.5,71 H11.5Z" fill="#aaa"/><rect x="2" y="16" width="11" height="23" rx="3" fill="#5e5e5e"/></svg>
<div class="a" style="left:0px;top:530px;width:1024px;height:16px;background:#232323"></div>
<div class="a" style="left:0;top:546px;width:1024px;height:30px;background:linear-gradient(to right,#e9edef 0%,#e6ede6 25%,#e4ede0 32%,#e6ebee 40%,#dde4ee 60%,#dfe6ef 100%)"></div>
<div class="a" style="left:330px;top:546px;width:36px;height:30px;background:rgba(255,255,255,0.45)"></div>
<svg class="a" style="left:11px;top:554px" width="14" height="13" viewBox="0 0 14 13"><path d="M0,1.8 L5.8,1 V6 H0Z M6.8,0.9 L14,0 V6 H6.8Z M0,7 H5.8 V12 L0,11.2Z M6.8,7 H14 V13 L6.8,12.1Z" fill="#111"/></svg>
<svg class="a" style="left:47px;top:554px" width="14" height="14" viewBox="0 0 14 14"><circle cx="8.5" cy="5.5" r="4.2" fill="none" stroke="#222" stroke-width="1.3"/><path d="M5.5,8.5 L1,13" stroke="#222" stroke-width="1.5"/></svg>
<svg class="a" style="left:83px;top:554px" width="14" height="14" viewBox="0 0 14 14"><rect x="2.5" y="3.5" width="9" height="7" fill="none" stroke="#222" stroke-width="1.2"/><path d="M1,1.5 H13 M1,12.5 H13" stroke="#222" stroke-width="1.2"/></svg>
<svg class="a" style="left:119px;top:551px" width="18" height="19" viewBox="0 0 18 19"><defs><linearGradient id="ge" x1="0" y1="0" x2="1" y2="1"><stop offset="0" stop-color="#35c1f1"/><stop offset="0.5" stop-color="#1a7fd4"/><stop offset="1" stop-color="#0c59a4"/></linearGradient></defs><circle cx="9" cy="9.5" r="8.8" fill="url(#ge)"/><path d="M9,4 A6,6 0 0 1 17.8,9.5 Q17,13 13,13 Q9,13 8.5,10.5 Q9,8.5 12,8.5 A4,4 0 0 0 9,4Z" fill="#5ddc7e"/><ellipse cx="11" cy="10.5" rx="2.8" ry="2" fill="#fff"/></svg>
<svg class="a" style="left:156px;top:553px" width="18" height="16" viewBox="0 0 18 16"><path d="M1,3 H7 L8.5,4.5 H17 V15 H1Z" fill="#f0c24a"/><rect x="1" y="6" width="16" height="9" fill="#ffd75e"/><path d="M6,15 V10 H12 V15 H10 V12 H8 V15Z" fill="#1e88e5"/></svg>
<svg class="a" style="left:192px;top:552px" width="18" height="18" viewBox="0 0 18 18"><path d="M5,5 V3 Q5,1 9,1 Q13,1 13,3 V5" fill="none" stroke="#333" stroke-width="1.3"/><rect x="1" y="5" width="16" height="12.5" fill="#1f2b38"/><rect x="5" y="8" width="3.5" height="3.5" fill="#f25022"/><rect x="9.5" y="8" width="3.5" height="3.5" fill="#7fba00"/><rect x="5" y="12.5" width="3.5" height="3.5" fill="#00a4ef"/><rect x="9.5" y="12.5" width="3.5" height="3.5" fill="#ffb900"/></svg>
<svg class="a" style="left:229px;top:552px" width="21" height="20" viewBox="0 0 21 20"><circle cx="9" cy="9" r="8" fill="#db4437"/><path d="M9,9 L16,5 A8,8 0 0 1 13,16Z" fill="#f4b400"/><path d="M9,9 L13,16 A8,8 0 0 1 2,5Z" fill="#0f9d58"/><circle cx="9" cy="9" r="3.5" fill="#fff"/><circle cx="9" cy="9" r="2.6" fill="#4285f4"/><circle cx="14.5" cy="14" r="5.5" fill="#777"/><path d="M12.5,17 L14.5,11 L16.5,17 M13.2,15 H15.8" fill="none" stroke="#fff" stroke-width="1"/></svg>
<div class="a" style="left:223px;top:574px;width:30px;height:2px;background:#1e78d8"></div>
<svg class="a" style="left:266px;top:552px" width="18" height="18" viewBox="0 0 18 18"><rect width="18" height="18" fill="#3b5998"/><path d="M12.5,18 V11 H15 L15.4,8.2 H12.5 V6.5 Q12.5,5.3 13.8,5.3 H15.5 V2.8 Q14.5,2.6 13,2.6 Q9.6,2.6 9.6,6 V8.2 H7.2 V11 H9.6 V18Z" fill="#fff"/></svg>
<svg class="a" style="left:304px;top:552px" width="17" height="17" viewBox="0 0 17 17"><circle cx="7.5" cy="10" r="6.5" fill="#7cc242"/><circle cx="7.5" cy="10" r="2.8" fill="#fff"/><path d="M11,2 L12,5 M13.8,3 L13,6 M16,5.5 L13.5,7" stroke="#e53935" stroke-width="1.4"/></svg>
<div class="a" style="left:298px;top:574px;width:29px;height:2px;background:#1e78d8"></div>
<svg class="a" style="left:342px;top:552px" width="13" height="14" viewBox="0 0 13 14"><circle cx="6.5" cy="7" r="6" fill="#27a6a0"/><path d="M6.5,1 A6,6 0 0 1 12.5,7 L6.5,7Z" fill="#e8453c"/><path d="M0.5,7 A6,6 0 0 1 6.5,1 L6.5,7Z" fill="#f3b63f"/><path d="M6.5,7 L12.5,7 A6,6 0 0 1 6.5,13Z" fill="#2d8fd5"/></svg>
<div class="a" style="left:330px;top:574px;width:36px;height:2px;background:#1e78d8"></div>
<svg class="a" style="left:846px;top:557px" width="10" height="6" viewBox="0 0 10 6"><path d="M0.8,5.5 L5,1 L9.2,5.5" fill="none" stroke="#222" stroke-width="1.2"/></svg>
<svg class="a" style="left:862px;top:557px" width="14" height="8" viewBox="0 0 14 8"><rect x="0.6" y="0.6" width="11" height="6.8" fill="none" stroke="#222" stroke-width="1.1"/><rect x="2" y="2" width="4" height="4" fill="#222"/><rect x="12" y="2.5" width="1.5" height="3" fill="#222"/></svg>
<svg class="a" style="left:882px;top:555px" width="10" height="14" viewBox="0 0 10 14"><rect x="1" y="3" width="6.5" height="8" rx="1.5" fill="none" stroke="#222" stroke-width="1.1"/><path d="M8.5,5.5 L10,4.5 V9.5 L8.5,8.5 M2,1 H6.5 M2,13 H6.5" stroke="#222" stroke-width="1"/></svg>
<svg class="a" style="left:900px;top:556px" width="11" height="11" viewBox="0 0 11 11"><path d="M1,10 A9,9 0 0 1 10,1 M3.5,10 A6.5,6.5 0 0 1 10,3.5 M6,10 A4,4 0 0 1 10,6" fill="none" stroke="#222" stroke-width="1.1"/><circle cx="9" cy="9" r="1.3" fill="#222"/></svg>
<svg class="a" style="left:916px;top:555px" width="14" height="13" viewBox="0 0 14 13"><path d="M1,4.5 H3.5 L7,1.5 V11.5 L3.5,8.5 H1Z" fill="none" stroke="#222" stroke-width="1.1"/><path d="M9,4.5 Q10,6.5 9,8.5 M10.8,3 Q12.8,6.5 10.8,10" fill="none" stroke="#222" stroke-width="1.1"/></svg>
<span class="a t" style="left:942.2px;top:549.2px;font-size:9.5px;line-height:9.5px;color:#222;font-weight:400;font-family:'Liberation Sans',sans-serif;transform:scaleX(0.895);">3:33 CH</span>
<span class="a t" style="left:936.3px;top:562.5px;font-size:9.5px;line-height:9.5px;color:#222;font-weight:400;font-family:'Liberation Sans',sans-serif;transform:scaleX(0.904);">06/09/2021</span>
<svg class="a" style="left:992px;top:555px" width="14" height="12" viewBox="0 0 14 12"><path d="M1,1 H13 V9 H8 L5.5,11.5 V9 H1Z" fill="none" stroke="#222" stroke-width="1.1"/></svg>
<div class="a" style="left:1019px;top:546px;width:1px;height:30px;background:#c8ccd0"></div>
</body></html>
